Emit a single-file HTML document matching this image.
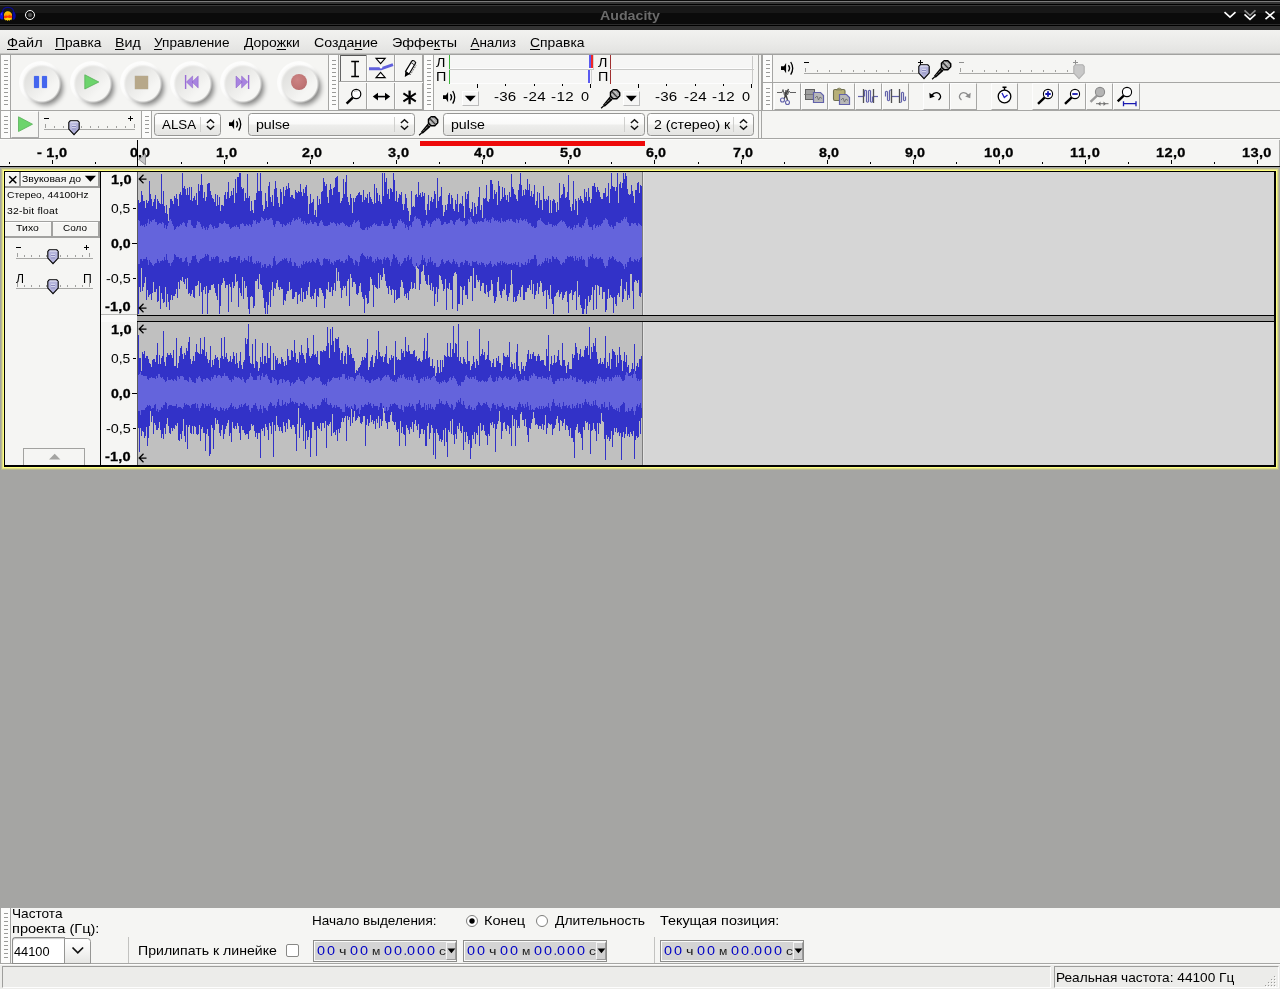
<!DOCTYPE html>
<html><head><meta charset="utf-8"><title>Audacity</title><style>
html,body{margin:0;padding:0}
body{width:1280px;height:989px;position:relative;overflow:hidden;background:#a5a5a3;font-family:"Liberation Sans", sans-serif;}
div,span,svg{position:absolute;box-sizing:border-box}
.t{white-space:pre;transform-origin:0 0;}
u{text-decoration:underline;text-decoration-thickness:1px;text-underline-offset:1.500px;text-decoration-skip-ink:none}
#root{left:0;top:0;width:1280px;height:989px;transform:translateZ(0);will-change:transform}
</style></head><body><div id="root">
<div style="left:0px;top:0px;width:1280px;height:30px;background:linear-gradient(to bottom,#0a0a0a 0px,#0a0a0a 1px,#7c7c7c 1px,#7c7c7c 2px,#333333 2px,#333333 4px,#000000 4px,#000000 5px,#383838 5px,#383838 6px,#181818 6px,#181818 13px,#0b0b0b 13px,#0b0b0b 24px,#2c2c2c 24px,#2c2c2c 25px,#000000 25px,#000000 26px,#333333 26px,#333333 30px);"></div>
<svg style="left:0;top:5px" width="17" height="18" viewBox="0 0 17 18">
<path d="M2.300 8.200 C2.300 3.600 5 2.300 8 2.300 C11 2.300 13.900 3.600 13.900 8.200" fill="none" stroke="#0a0a90" stroke-width="1.200"/>
<path d="M3.300 7 V14.600 H2 C0.600 14.600 -0.400 13 -0.400 11 C-0.400 9 0.800 7 2 7 Z" fill="#1212d6"/>
<path d="M1 8.400 L1.800 8 V10 L1 10.400 Z" fill="#4a4aff"/>
<path d="M12.600 6.800 V14.800 H13.600 C14.800 14.800 15.700 13 15.700 10.800 C15.700 8.600 14.800 6.800 13.600 6.800 Z" fill="#0a0a9c"/>
<path d="M3.900 11 C3.900 8 5.600 6.400 7.600 6.300 C9.800 6.200 12.100 7.800 12.100 11 C12.100 13 11.800 14.400 11.200 15.200 L10.400 14.600 L9.800 15.800 L8.600 14.900 L7.600 15.900 L6.800 14.900 L5.600 15.500 L5 14.600 L4.400 14.800 C4.100 13.800 3.900 12.400 3.900 11 Z" fill="#ffd200"/>
<path d="M4.600 8.400 Q8 6 11.500 8.600 L11.800 10.400 H4.200 Z" fill="#ffb400"/>
<path d="M4 10.900 L6 10.300 L7.600 10.800 L9.400 10 L12 10.700 V12.700 L9.400 13 L7.600 12.600 L5.800 13.200 L4 12.900 Z" fill="#ff3600"/>
<path d="M4 10.500 L6 9.900 L7.600 10.400 L9.400 9.600 L12 10.300" fill="none" stroke="#ff8a00" stroke-width=".700"/>
</svg>
<div style="left:25px;top:10px;width:10px;height:10px;border-radius:50%;border:1.600px solid #fff;background:radial-gradient(circle,#5c5c5c 0,#4a4a4a 1.700px,#0b0b0b 2.700px)"></div>
<span class="t" style="left:599.50px;top:9.33px;font-size:13.2px;line-height:13.2px;font-weight:bold;color:#6b6b6b;letter-spacing:0.000px;transform:scaleX(1.0768);">Audacity</span>
<svg style="left:1220px;top:6px" width="60" height="18" viewBox="0 0 60 18">
<g fill="none" stroke-linecap="butt">
<path d="M4.5 6.2 L10 11.2 L15.5 6.2" stroke="#fff" stroke-width="1.6"/>
<path d="M24.5 4.4 L30 9.4 L35.5 4.4" stroke="#8a8a8a" stroke-width="1.6"/>
<path d="M24.5 8.4 L30 13.4 L35.5 8.4" stroke="#fff" stroke-width="1.6"/>
<path d="M45.5 5.5 L54.5 13.2 M54.5 5.5 L45.5 13.2" stroke="#fff" stroke-width="1.6"/>
</g></svg>
<div style="left:0px;top:30px;width:1280px;height:24px;background:linear-gradient(to bottom,#f2f2f0 0,#ebebe9 50%,#e2e2e0 100%);"></div>
<div style="left:0px;top:53px;width:1280px;height:1px;background:#c4c4c2;"></div>
<div style="left:0px;top:54px;width:1280px;height:1px;background:#a2a2a0;"></div>
<span class="t" style="left:7.20px;top:36.07px;font-size:13.5px;line-height:13.5px;font-weight:normal;color:#000;letter-spacing:0.000px;transform:scaleX(1.0742);"><u>Ф</u>айл</span>
<span class="t" style="left:55.40px;top:36.07px;font-size:13.5px;line-height:13.5px;font-weight:normal;color:#000;letter-spacing:0.000px;transform:scaleX(1.0178);"><u>П</u>равка</span>
<span class="t" style="left:115.40px;top:36.07px;font-size:13.5px;line-height:13.5px;font-weight:normal;color:#000;letter-spacing:0.000px;transform:scaleX(1.0522);"><u>В</u>ид</span>
<span class="t" style="left:154.20px;top:36.07px;font-size:13.5px;line-height:13.5px;font-weight:normal;color:#000;letter-spacing:0.000px;transform:scaleX(1.0054);"><u>У</u>правление</span>
<span class="t" style="left:243.90px;top:36.07px;font-size:13.5px;line-height:13.5px;font-weight:normal;color:#000;letter-spacing:0.000px;transform:scaleX(1.0321);">Доро<u>ж</u>ки</span>
<span class="t" style="left:313.60px;top:36.07px;font-size:13.5px;line-height:13.5px;font-weight:normal;color:#000;letter-spacing:0.000px;transform:scaleX(1.0500);">Созда<u>н</u>ие</span>
<span class="t" style="left:391.70px;top:36.07px;font-size:13.5px;line-height:13.5px;font-weight:normal;color:#000;letter-spacing:0.000px;transform:scaleX(1.0617);">Эффе<u>к</u>ты</span>
<span class="t" style="left:470.40px;top:36.07px;font-size:13.5px;line-height:13.5px;font-weight:normal;color:#000;letter-spacing:0.000px;transform:scaleX(1.0000);"><u>А</u>нализ</span>
<span class="t" style="left:530.40px;top:36.07px;font-size:13.5px;line-height:13.5px;font-weight:normal;color:#000;letter-spacing:0.000px;transform:scaleX(1.0288);"><u>С</u>правка</span>
<div style="left:0px;top:55px;width:1280px;height:83px;background:#f5f5f3;"></div>
<div style="left:0px;top:110px;width:1280px;height:1px;background:#a6a6a4;"></div>
<div style="left:0px;top:138px;width:1280px;height:1px;background:#a6a6a4;"></div>
<div style="left:762px;top:82px;width:518px;height:1px;background:#a6a6a4;"></div>
<div style="left:0px;top:55px;width:1px;height:55px;background:#a6a6a4;"></div>
<div style="left:1px;top:55px;width:9px;height:55px;background:#fcfcfb;"></div>
<div style="left:10px;top:55px;width:1px;height:55px;background:#a6a6a4;"></div>
<div style="left:4px;top:60px;width:4px;height:1px;background:#9a9a98;"></div>
<div style="left:4px;top:64px;width:4px;height:1px;background:#9a9a98;"></div>
<div style="left:4px;top:68px;width:4px;height:1px;background:#9a9a98;"></div>
<div style="left:4px;top:72px;width:4px;height:1px;background:#9a9a98;"></div>
<div style="left:4px;top:76px;width:4px;height:1px;background:#9a9a98;"></div>
<div style="left:4px;top:80px;width:4px;height:1px;background:#9a9a98;"></div>
<div style="left:4px;top:84px;width:4px;height:1px;background:#9a9a98;"></div>
<div style="left:4px;top:88px;width:4px;height:1px;background:#9a9a98;"></div>
<div style="left:4px;top:92px;width:4px;height:1px;background:#9a9a98;"></div>
<div style="left:4px;top:96px;width:4px;height:1px;background:#9a9a98;"></div>
<div style="left:4px;top:100px;width:4px;height:1px;background:#9a9a98;"></div>
<div style="left:4px;top:104px;width:4px;height:1px;background:#9a9a98;"></div>
<div style="left:19px;top:61px;width:44px;height:44px;border-radius:50%;background:radial-gradient(circle at 46% 46%,rgba(255,255,255,0) 14px,#fdfdfd 18px,rgba(253,253,252,.9) 20px,rgba(250,250,249,0) 22px)"></div>
<div style="left:27.5px;top:69.9px;width:35px;height:35px;border-radius:50%;background:rgba(0,0,0,.46);filter:blur(2.800px)"></div>
<div style="left:21.7px;top:63.8px;width:40px;height:40px;background:linear-gradient(135deg,#dededc 14%,#e9e9e7 40%,#f6f6f4 68%);-webkit-mask-image:radial-gradient(circle,#000 16.900px,transparent 19.300px);mask-image:radial-gradient(circle,#000 16.900px,transparent 19.300px)"></div>
<div style="left:70px;top:61px;width:44px;height:44px;border-radius:50%;background:radial-gradient(circle at 46% 46%,rgba(255,255,255,0) 14px,#fdfdfd 18px,rgba(253,253,252,.9) 20px,rgba(250,250,249,0) 22px)"></div>
<div style="left:78.5px;top:69.9px;width:35px;height:35px;border-radius:50%;background:rgba(0,0,0,.46);filter:blur(2.800px)"></div>
<div style="left:72.7px;top:63.8px;width:40px;height:40px;background:linear-gradient(135deg,#dededc 14%,#e9e9e7 40%,#f6f6f4 68%);-webkit-mask-image:radial-gradient(circle,#000 16.900px,transparent 19.300px);mask-image:radial-gradient(circle,#000 16.900px,transparent 19.300px)"></div>
<div style="left:120px;top:61px;width:44px;height:44px;border-radius:50%;background:radial-gradient(circle at 46% 46%,rgba(255,255,255,0) 14px,#fdfdfd 18px,rgba(253,253,252,.9) 20px,rgba(250,250,249,0) 22px)"></div>
<div style="left:128.5px;top:69.9px;width:35px;height:35px;border-radius:50%;background:rgba(0,0,0,.46);filter:blur(2.800px)"></div>
<div style="left:122.7px;top:63.8px;width:40px;height:40px;background:linear-gradient(135deg,#dededc 14%,#e9e9e7 40%,#f6f6f4 68%);-webkit-mask-image:radial-gradient(circle,#000 16.900px,transparent 19.300px);mask-image:radial-gradient(circle,#000 16.900px,transparent 19.300px)"></div>
<div style="left:170px;top:61px;width:44px;height:44px;border-radius:50%;background:radial-gradient(circle at 46% 46%,rgba(255,255,255,0) 14px,#fdfdfd 18px,rgba(253,253,252,.9) 20px,rgba(250,250,249,0) 22px)"></div>
<div style="left:178.5px;top:69.9px;width:35px;height:35px;border-radius:50%;background:rgba(0,0,0,.46);filter:blur(2.800px)"></div>
<div style="left:172.7px;top:63.8px;width:40px;height:40px;background:linear-gradient(135deg,#dededc 14%,#e9e9e7 40%,#f6f6f4 68%);-webkit-mask-image:radial-gradient(circle,#000 16.900px,transparent 19.300px);mask-image:radial-gradient(circle,#000 16.900px,transparent 19.300px)"></div>
<div style="left:220px;top:61px;width:44px;height:44px;border-radius:50%;background:radial-gradient(circle at 46% 46%,rgba(255,255,255,0) 14px,#fdfdfd 18px,rgba(253,253,252,.9) 20px,rgba(250,250,249,0) 22px)"></div>
<div style="left:228.5px;top:69.9px;width:35px;height:35px;border-radius:50%;background:rgba(0,0,0,.46);filter:blur(2.800px)"></div>
<div style="left:222.7px;top:63.8px;width:40px;height:40px;background:linear-gradient(135deg,#dededc 14%,#e9e9e7 40%,#f6f6f4 68%);-webkit-mask-image:radial-gradient(circle,#000 16.900px,transparent 19.300px);mask-image:radial-gradient(circle,#000 16.900px,transparent 19.300px)"></div>
<div style="left:277px;top:61px;width:44px;height:44px;border-radius:50%;background:radial-gradient(circle at 46% 46%,rgba(255,255,255,0) 14px,#fdfdfd 18px,rgba(253,253,252,.9) 20px,rgba(250,250,249,0) 22px)"></div>
<div style="left:285.5px;top:69.9px;width:35px;height:35px;border-radius:50%;background:rgba(0,0,0,.46);filter:blur(2.800px)"></div>
<div style="left:279.7px;top:63.8px;width:40px;height:40px;background:linear-gradient(135deg,#dededc 14%,#e9e9e7 40%,#f6f6f4 68%);-webkit-mask-image:radial-gradient(circle,#000 16.900px,transparent 19.300px);mask-image:radial-gradient(circle,#000 16.900px,transparent 19.300px)"></div>
<div style="left:34px;top:76px;width:5px;height:12px;background:#4466ee;border-radius:1px;box-shadow:0 0 1px #4466ee"></div>
<div style="left:42px;top:76px;width:5px;height:12px;background:#4466ee;border-radius:1px;box-shadow:0 0 1px #4466ee"></div>
<svg style="left:82px;top:72px" width="20" height="20"><path d="M2.8 2.8 L16.8 10 L2.8 17 Z" fill="#6cd46c" stroke="#58b058" stroke-width=".8"/></svg>
<div style="left:135px;top:76px;width:13px;height:13px;background:#b7a88a;box-shadow:0 0 1px #9a8f78"></div>
<svg style="left:182px;top:72px" width="20" height="20"><path d="M3.6 3 V17" stroke="#9a6cd6" stroke-width="1.4"/><path d="M4.4 10 L10.6 4 V16 Z M10 10 L16.2 4 V16 Z" fill="#a884e0" stroke="#8a5ec8" stroke-width=".5"/></svg>
<svg style="left:232px;top:72px" width="20" height="20"><path d="M16.6 3 V17" stroke="#9a6cd6" stroke-width="1.4"/><path d="M15.8 10 L9.6 4 V16 Z M10.2 10 L4 4 V16 Z" fill="#a884e0" stroke="#8a5ec8" stroke-width=".5"/></svg>
<div style="left:291px;top:74px;width:16px;height:16px;border-radius:50%;background:radial-gradient(circle at 40% 35%,#cc8484,#bf7474 60%,#a86060)"></div>
<div style="left:328px;top:55px;width:1px;height:55px;background:#a6a6a4;"></div>
<div style="left:328px;top:55px;width:1px;height:55px;background:#a6a6a4;"></div>
<div style="left:329px;top:55px;width:9px;height:55px;background:#fcfcfb;"></div>
<div style="left:338px;top:55px;width:1px;height:55px;background:#a6a6a4;"></div>
<div style="left:332px;top:60px;width:4px;height:1px;background:#9a9a98;"></div>
<div style="left:332px;top:64px;width:4px;height:1px;background:#9a9a98;"></div>
<div style="left:332px;top:68px;width:4px;height:1px;background:#9a9a98;"></div>
<div style="left:332px;top:72px;width:4px;height:1px;background:#9a9a98;"></div>
<div style="left:332px;top:76px;width:4px;height:1px;background:#9a9a98;"></div>
<div style="left:332px;top:80px;width:4px;height:1px;background:#9a9a98;"></div>
<div style="left:332px;top:84px;width:4px;height:1px;background:#9a9a98;"></div>
<div style="left:332px;top:88px;width:4px;height:1px;background:#9a9a98;"></div>
<div style="left:332px;top:92px;width:4px;height:1px;background:#9a9a98;"></div>
<div style="left:332px;top:96px;width:4px;height:1px;background:#9a9a98;"></div>
<div style="left:332px;top:100px;width:4px;height:1px;background:#9a9a98;"></div>
<div style="left:332px;top:104px;width:4px;height:1px;background:#9a9a98;"></div>
<div style="left:339px;top:55px;width:84px;height:55px;background:#f5f5f3;"></div>
<div style="left:366px;top:55px;width:1px;height:55px;background:#a4a4a2;"></div>
<div style="left:367px;top:55px;width:1px;height:55px;background:#fbfbfa;"></div>
<div style="left:394px;top:55px;width:1px;height:55px;background:#a4a4a2;"></div>
<div style="left:395px;top:55px;width:1px;height:55px;background:#fbfbfa;"></div>
<div style="left:422px;top:55px;width:1px;height:55px;background:#a4a4a2;"></div>
<div style="left:423px;top:55px;width:1px;height:55px;background:#fbfbfa;"></div>
<div style="left:339px;top:81px;width:84px;height:1px;background:#a4a4a2;"></div>
<div style="left:339px;top:82px;width:84px;height:1px;background:#fbfbfa;"></div>
<div style="left:339px;top:109px;width:84px;height:1px;background:#a4a4a2;"></div>
<div style="left:340px;top:55px;width:26px;height:1px;background:#555;"></div>
<div style="left:340px;top:55px;width:1px;height:26px;background:#666;"></div>
<svg style="left:340px;top:55px" width="83" height="55" viewBox="0 0 83 55">
<path d="M11.200 6.600 H19 M11.200 21.600 H19 M15.100 6.600 V21.600" stroke="#000" stroke-width="1.500" fill="none"/>
<path d="M36 3.400 H45.200 L40.600 8.600 Z M36 22.600 H45.200 L40.600 17.400 Z" fill="#fff" stroke="#000" stroke-width="1.100"/>
<path d="M29 13.800 H41 L53 9.600" fill="none" stroke="#6060dc" stroke-width="2.900"/>
<circle cx="41" cy="12.300" r="1.200" fill="#fff"/>
<path d="M65.600 16.400 L71.200 7.200 L74.600 9.700 L69 19.200 Z" fill="#fff" stroke="#000" stroke-width="1.200"/>
<path d="M65.400 16.200 L64.800 22 L69.300 19.300 Z" fill="#000"/>
<path d="M71.200 7.200 L72.300 5.600 Q74.600 5 75.700 7.700 L74.600 9.700" fill="#e4e4e4" stroke="#000" stroke-width="1.100"/>
<path d="M70.300 19.800 L76 10.600" stroke="#444" stroke-width=".900" stroke-dasharray="1 1"/>
<circle cx="16.200" cy="39" r="4.600" fill="#fff" stroke="#000" stroke-width="1.200"/>
<path d="M14 36.800 Q15.500 35.600 17.400 36" fill="none" stroke="#aaa" stroke-width=".800"/>
<path d="M12.800 42.600 L6.600 48.600" stroke="#000" stroke-width="2.500"/>
<path d="M35 41.600 H48" stroke="#000" stroke-width="1.600"/>
<path d="M32.800 41.600 L38 37.800 V45.400 Z M50.200 41.600 L45 37.800 V45.400 Z" fill="#000"/>
<path d="M69.600 35.600 V49.200" stroke="#000" stroke-width="2.300" fill="none"/>
<path d="M63.400 38.400 L75.800 46.400 M75.800 38.400 L63.400 46.400" stroke="#000" stroke-width="1.900" fill="none"/>
</svg>
<div style="left:423px;top:55px;width:1px;height:55px;background:#a6a6a4;"></div>
<div style="left:423px;top:55px;width:1px;height:55px;background:#a6a6a4;"></div>
<div style="left:424px;top:55px;width:9px;height:55px;background:#fcfcfb;"></div>
<div style="left:433px;top:55px;width:1px;height:55px;background:#a6a6a4;"></div>
<div style="left:427px;top:60px;width:4px;height:1px;background:#9a9a98;"></div>
<div style="left:427px;top:64px;width:4px;height:1px;background:#9a9a98;"></div>
<div style="left:427px;top:68px;width:4px;height:1px;background:#9a9a98;"></div>
<div style="left:427px;top:72px;width:4px;height:1px;background:#9a9a98;"></div>
<div style="left:427px;top:76px;width:4px;height:1px;background:#9a9a98;"></div>
<div style="left:427px;top:80px;width:4px;height:1px;background:#9a9a98;"></div>
<div style="left:427px;top:84px;width:4px;height:1px;background:#9a9a98;"></div>
<div style="left:427px;top:88px;width:4px;height:1px;background:#9a9a98;"></div>
<div style="left:427px;top:92px;width:4px;height:1px;background:#9a9a98;"></div>
<div style="left:427px;top:96px;width:4px;height:1px;background:#9a9a98;"></div>
<div style="left:427px;top:100px;width:4px;height:1px;background:#9a9a98;"></div>
<div style="left:427px;top:104px;width:4px;height:1px;background:#9a9a98;"></div>
<div style="left:449px;top:55px;width:145px;height:14px;background:#f6f6f5;"></div>
<div style="left:449px;top:70px;width:145px;height:14px;background:#f6f6f5;"></div>
<div style="left:449px;top:69px;width:145px;height:1px;background:#c8c8c6;"></div>
<div style="left:449px;top:68px;width:145px;height:1px;background:#fdfdfd;"></div>
<div style="left:449px;top:83px;width:145px;height:1px;background:#fdfdfd;"></div>
<div style="left:449px;top:55px;width:1px;height:14px;background:#3cb43c;"></div>
<div style="left:449px;top:70px;width:1px;height:14px;background:#3cb43c;"></div>
<div style="left:610px;top:55px;width:144px;height:14px;background:#f6f6f5;"></div>
<div style="left:610px;top:70px;width:144px;height:14px;background:#f6f6f5;"></div>
<div style="left:610px;top:69px;width:144px;height:1px;background:#c8c8c6;"></div>
<div style="left:610px;top:68px;width:144px;height:1px;background:#fdfdfd;"></div>
<div style="left:610px;top:83px;width:144px;height:1px;background:#fdfdfd;"></div>
<div style="left:610px;top:55px;width:1px;height:14px;background:#a03030;"></div>
<div style="left:610px;top:70px;width:1px;height:14px;background:#a03030;"></div>
<div style="left:752px;top:56px;width:1px;height:28px;background:#c8c8c6;"></div>
<div style="left:589px;top:55px;width:2px;height:13px;background:#5a5af0;"></div>
<div style="left:591px;top:55px;width:2px;height:13px;background:#f02828;"></div>
<div style="left:588px;top:70px;width:2px;height:13px;background:#5a5af0;"></div>
<div style="left:593px;top:55px;width:1px;height:14px;background:#d0d0ce;"></div>
<div style="left:591px;top:70px;width:1px;height:14px;background:#d0d0ce;"></div>
<span class="t" style="left:436.20px;top:56.07px;font-size:13.5px;line-height:13.5px;font-weight:normal;color:#000;letter-spacing:0.000px;transform:scaleX(1.0625);">Л</span>
<span class="t" style="left:436.20px;top:70.07px;font-size:13.5px;line-height:13.5px;font-weight:normal;color:#000;letter-spacing:0.000px;transform:scaleX(1.0625);">П</span>
<span class="t" style="left:597.70px;top:56.07px;font-size:13.5px;line-height:13.5px;font-weight:normal;color:#000;letter-spacing:0.000px;transform:scaleX(1.0625);">Л</span>
<span class="t" style="left:597.70px;top:70.07px;font-size:13.5px;line-height:13.5px;font-weight:normal;color:#000;letter-spacing:0.000px;transform:scaleX(1.0625);">П</span>
<div style="left:477px;top:84px;width:1px;height:4px;background:#000;"></div>
<div style="left:505px;top:84px;width:1px;height:2px;background:#000;"></div>
<div style="left:534px;top:84px;width:1px;height:2px;background:#000;"></div>
<div style="left:562px;top:84px;width:1px;height:2px;background:#000;"></div>
<div style="left:590px;top:84px;width:1px;height:4px;background:#000;"></div>
<div style="left:638px;top:84px;width:1px;height:4px;background:#000;"></div>
<div style="left:666px;top:84px;width:1px;height:2px;background:#000;"></div>
<div style="left:695px;top:84px;width:1px;height:2px;background:#000;"></div>
<div style="left:723px;top:84px;width:1px;height:2px;background:#000;"></div>
<div style="left:751px;top:84px;width:1px;height:4px;background:#000;"></div>
<span class="t" style="left:493.70px;top:90.07px;font-size:13.5px;line-height:13.5px;font-weight:normal;color:#000;letter-spacing:0.152px;transform:scaleX(1.1200);">-36</span>
<span class="t" style="left:522.70px;top:90.07px;font-size:13.5px;line-height:13.5px;font-weight:normal;color:#000;letter-spacing:0.375px;transform:scaleX(1.1200);">-24</span>
<span class="t" style="left:550.70px;top:90.07px;font-size:13.5px;line-height:13.5px;font-weight:normal;color:#000;letter-spacing:0.375px;transform:scaleX(1.1200);">-12</span>
<span class="t" style="left:581.20px;top:90.07px;font-size:13.5px;line-height:13.5px;font-weight:normal;color:#000;letter-spacing:0.000px;transform:scaleX(1.0714);">0</span>
<span class="t" style="left:654.70px;top:90.07px;font-size:13.5px;line-height:13.5px;font-weight:normal;color:#000;letter-spacing:0.152px;transform:scaleX(1.1200);">-36</span>
<span class="t" style="left:683.70px;top:90.07px;font-size:13.5px;line-height:13.5px;font-weight:normal;color:#000;letter-spacing:0.375px;transform:scaleX(1.1200);">-24</span>
<span class="t" style="left:711.70px;top:90.07px;font-size:13.5px;line-height:13.5px;font-weight:normal;color:#000;letter-spacing:0.375px;transform:scaleX(1.1200);">-12</span>
<span class="t" style="left:742.20px;top:90.07px;font-size:13.5px;line-height:13.5px;font-weight:normal;color:#000;letter-spacing:0.000px;transform:scaleX(1.0714);">0</span>
<svg style="left:442.200px;top:90.100px" width="15" height="15" viewBox="0 0 15 15"><path d="M1 5.200 H4 L6.100 1.900 V12.300 L4 9 H1 Z" fill="#000"/><path d="M8.400 4.300 Q10.700 7.100 8.400 10.300" fill="none" stroke="#000" stroke-width="1.400"/><path d="M10.700 1 Q14.700 7.200 10.700 13.600" fill="none" stroke="#000" stroke-width="1.300"/></svg>
<div style="left:462px;top:91px;width:17px;height:15px;background:#f6f6f5;border-right:1px solid #bbb;border-bottom:1px solid #bbb;border-top:1px solid #fff;border-left:1px solid #fff"></div>
<svg style="left:464px;top:95px" width="13" height="8"><path d="M0.8 0.8 H11.8 L6.3 6.6 Z" fill="#000"/></svg>
<div style="left:623px;top:91px;width:17px;height:15px;background:#f6f6f5;border-right:1px solid #bbb;border-bottom:1px solid #bbb;border-top:1px solid #fff;border-left:1px solid #fff"></div>
<svg style="left:625px;top:95px" width="13" height="8"><path d="M0.8 0.8 H11.8 L6.3 6.6 Z" fill="#000"/></svg>
<svg style="left:600px;top:87px" width="22" height="22" viewBox="0 0 22 22"><path d="M9.600 9.800 L12.600 12.700 L4.700 19.700 L2.900 17.900 Z" fill="#000"/>
<path d="M3.800 18.800 L1.100 21.300" stroke="#000" stroke-width="1.200"/>
<path d="M10.600 11.600 L4.800 17.600" stroke="#fff" stroke-width=".800" stroke-dasharray="1 1"/>
<path d="M13.200 2.800 H16.800 L19.700 5.800 V8.800 L16.800 11.700 H13 L10.500 9.400 V5.400 Z" fill="#a8a8a8" stroke="#000" stroke-width="1.500" stroke-linejoin="round"/>
<path d="M13.400 3.600 L18.800 9" stroke="#e8e8e8" stroke-width="1" stroke-dasharray="1.100 .900"/>
<path d="M12.200 5 L17.400 10.400" stroke="#303030" stroke-width="1.100"/>
<path d="M11.400 7 L15.400 11.200" stroke="#e8e8e8" stroke-width="1" stroke-dasharray="1.100 .900"/></svg>
<div style="left:758px;top:55px;width:1px;height:83px;background:#a6a6a4;"></div>
<div style="left:761px;top:55px;width:1px;height:83px;background:#a6a6a4;"></div>
<div style="left:762px;top:55px;width:1px;height:27px;background:#a6a6a4;"></div>
<div style="left:763px;top:55px;width:9px;height:27px;background:#fcfcfb;"></div>
<div style="left:772px;top:55px;width:1px;height:27px;background:#a6a6a4;"></div>
<div style="left:766px;top:60px;width:4px;height:1px;background:#9a9a98;"></div>
<div style="left:766px;top:64px;width:4px;height:1px;background:#9a9a98;"></div>
<div style="left:766px;top:68px;width:4px;height:1px;background:#9a9a98;"></div>
<div style="left:766px;top:72px;width:4px;height:1px;background:#9a9a98;"></div>
<div style="left:766px;top:76px;width:4px;height:1px;background:#9a9a98;"></div>
<svg style="left:779.700px;top:61.400px" width="15" height="15" viewBox="0 0 15 15"><path d="M1 5.200 H4 L6.100 1.900 V12.300 L4 9 H1 Z" fill="#000"/><path d="M8.400 4.300 Q10.700 7.100 8.400 10.300" fill="none" stroke="#000" stroke-width="1.400"/><path d="M10.700 1 Q14.700 7.200 10.700 13.600" fill="none" stroke="#000" stroke-width="1.300"/></svg>
<div style="left:804px;top:73px;width:121px;height:1px;background:#a8a8a6;"></div>
<div style="left:805px;top:68px;width:1px;height:4px;background:#a0a09e;"></div>
<div style="left:817px;top:70px;width:1px;height:2px;background:#a0a09e;"></div>
<div style="left:829px;top:70px;width:1px;height:2px;background:#a0a09e;"></div>
<div style="left:841px;top:70px;width:1px;height:2px;background:#a0a09e;"></div>
<div style="left:853px;top:70px;width:1px;height:2px;background:#a0a09e;"></div>
<div style="left:864px;top:70px;width:1px;height:2px;background:#a0a09e;"></div>
<div style="left:876px;top:70px;width:1px;height:2px;background:#a0a09e;"></div>
<div style="left:888px;top:70px;width:1px;height:2px;background:#a0a09e;"></div>
<div style="left:900px;top:70px;width:1px;height:2px;background:#a0a09e;"></div>
<div style="left:912px;top:70px;width:1px;height:2px;background:#a0a09e;"></div>
<div style="left:924px;top:68px;width:1px;height:4px;background:#a0a09e;"></div>
<div style="left:804px;top:62px;width:5px;height:1.4px;background:#000;"></div>
<div style="left:918px;top:61.8px;width:5.4px;height:1.4px;background:#000;"></div>
<div style="left:920px;top:59.8px;width:1.4px;height:5.4px;background:#000;"></div>
<svg style="left:918px;top:64px" width="12" height="16" viewBox="0 0 12 16"><defs><linearGradient id="tg" x1="0" y1="0" x2="1" y2="1"><stop offset="0" stop-color="#c8c8e8"/><stop offset="1" stop-color="#a0a0cc"/></linearGradient></defs><path d="M2.2 0.8 H9.8 L11.2 2.4 V9 L6 14.6 L0.8 9 V2.4 Z" fill="url(#tg)" stroke="#000" stroke-width="1.100"/><path d="M2.600 2 H9.400 L10.200 2.800" fill="none" stroke="#f4f4fc" stroke-width=".800" opacity="1"/><path d="M4 6.3 H8 M4 8.8 H8" stroke="#8080b8" stroke-width="1"/><path d="M4 5.4 H8 M4 7.8 H8" stroke="#e8e8f8" stroke-width=".8"/></svg>
<svg style="left:931px;top:58px" width="22" height="22" viewBox="0 0 22 22"><path d="M9.600 9.800 L12.600 12.700 L4.700 19.700 L2.900 17.900 Z" fill="#000"/>
<path d="M3.800 18.800 L1.100 21.300" stroke="#000" stroke-width="1.200"/>
<path d="M10.600 11.600 L4.800 17.600" stroke="#fff" stroke-width=".800" stroke-dasharray="1 1"/>
<path d="M13.200 2.800 H16.800 L19.700 5.800 V8.800 L16.800 11.700 H13 L10.500 9.400 V5.400 Z" fill="#a8a8a8" stroke="#000" stroke-width="1.500" stroke-linejoin="round"/>
<path d="M13.400 3.600 L18.800 9" stroke="#e8e8e8" stroke-width="1" stroke-dasharray="1.100 .900"/>
<path d="M12.200 5 L17.400 10.400" stroke="#303030" stroke-width="1.100"/>
<path d="M11.400 7 L15.400 11.200" stroke="#e8e8e8" stroke-width="1" stroke-dasharray="1.100 .900"/></svg>
<div style="left:959px;top:73px;width:121px;height:1px;background:#a8a8a6;"></div>
<div style="left:960px;top:68px;width:1px;height:4px;background:#a0a09e;"></div>
<div style="left:972px;top:70px;width:1px;height:2px;background:#a0a09e;"></div>
<div style="left:984px;top:70px;width:1px;height:2px;background:#a0a09e;"></div>
<div style="left:996px;top:70px;width:1px;height:2px;background:#a0a09e;"></div>
<div style="left:1008px;top:70px;width:1px;height:2px;background:#a0a09e;"></div>
<div style="left:1020px;top:70px;width:1px;height:2px;background:#a0a09e;"></div>
<div style="left:1031px;top:70px;width:1px;height:2px;background:#a0a09e;"></div>
<div style="left:1043px;top:70px;width:1px;height:2px;background:#a0a09e;"></div>
<div style="left:1055px;top:70px;width:1px;height:2px;background:#a0a09e;"></div>
<div style="left:1067px;top:70px;width:1px;height:2px;background:#a0a09e;"></div>
<div style="left:1079px;top:68px;width:1px;height:4px;background:#a0a09e;"></div>
<div style="left:959px;top:62px;width:5px;height:1.4px;background:#909090;"></div>
<div style="left:1073px;top:61.8px;width:5.4px;height:1.4px;background:#909090;"></div>
<div style="left:1075px;top:59.8px;width:1.4px;height:5.4px;background:#909090;"></div>
<svg style="left:1073px;top:64px" width="12" height="16" viewBox="0 0 12 16"><defs><linearGradient id="tg" x1="0" y1="0" x2="1" y2="1"><stop offset="0" stop-color="#c8c8e8"/><stop offset="1" stop-color="#a0a0cc"/></linearGradient></defs><path d="M2.2 0.8 H9.8 L11.2 2.4 V9 L6 14.6 L0.8 9 V2.4 Z" fill="#c8c8c8" stroke="#b0b0b0" stroke-width="1.100"/><path d="M2.600 2 H9.400 L10.200 2.800" fill="none" stroke="#f4f4fc" stroke-width=".800" opacity="0"/></svg>
<div style="left:762px;top:83px;width:1px;height:27px;background:#a6a6a4;"></div>
<div style="left:763px;top:83px;width:9px;height:27px;background:#fcfcfb;"></div>
<div style="left:772px;top:83px;width:1px;height:27px;background:#a6a6a4;"></div>
<div style="left:766px;top:88px;width:4px;height:1px;background:#9a9a98;"></div>
<div style="left:766px;top:92px;width:4px;height:1px;background:#9a9a98;"></div>
<div style="left:766px;top:96px;width:4px;height:1px;background:#9a9a98;"></div>
<div style="left:766px;top:100px;width:4px;height:1px;background:#9a9a98;"></div>
<div style="left:766px;top:104px;width:4px;height:1px;background:#9a9a98;"></div>
<div style="left:774px;top:83px;width:27px;height:27px;background:#f6f6f4;border-right:1px solid #a6a6a4;border-bottom:1px solid #a6a6a4;border-top:1px solid #fdfdfd;border-left:1px solid #fdfdfd"></div>
<div style="left:801px;top:83px;width:27px;height:27px;background:#f6f6f4;border-right:1px solid #a6a6a4;border-bottom:1px solid #a6a6a4;border-top:1px solid #fdfdfd;border-left:1px solid #fdfdfd"></div>
<div style="left:828px;top:83px;width:27px;height:27px;background:#f6f6f4;border-right:1px solid #a6a6a4;border-bottom:1px solid #a6a6a4;border-top:1px solid #fdfdfd;border-left:1px solid #fdfdfd"></div>
<div style="left:855px;top:83px;width:27px;height:27px;background:#f6f6f4;border-right:1px solid #a6a6a4;border-bottom:1px solid #a6a6a4;border-top:1px solid #fdfdfd;border-left:1px solid #fdfdfd"></div>
<div style="left:882px;top:83px;width:27px;height:27px;background:#f6f6f4;border-right:1px solid #a6a6a4;border-bottom:1px solid #a6a6a4;border-top:1px solid #fdfdfd;border-left:1px solid #fdfdfd"></div>
<div style="left:923px;top:83px;width:27px;height:27px;background:#f6f6f4;border-right:1px solid #a6a6a4;border-bottom:1px solid #a6a6a4;border-top:1px solid #fdfdfd;border-left:1px solid #fdfdfd"></div>
<div style="left:950px;top:83px;width:27px;height:27px;background:#f6f6f4;border-right:1px solid #a6a6a4;border-bottom:1px solid #a6a6a4;border-top:1px solid #fdfdfd;border-left:1px solid #fdfdfd"></div>
<div style="left:991px;top:83px;width:27px;height:27px;background:#f6f6f4;border-right:1px solid #a6a6a4;border-bottom:1px solid #a6a6a4;border-top:1px solid #fdfdfd;border-left:1px solid #fdfdfd"></div>
<div style="left:1032px;top:83px;width:27px;height:27px;background:#f6f6f4;border-right:1px solid #a6a6a4;border-bottom:1px solid #a6a6a4;border-top:1px solid #fdfdfd;border-left:1px solid #fdfdfd"></div>
<div style="left:1059px;top:83px;width:27px;height:27px;background:#f6f6f4;border-right:1px solid #a6a6a4;border-bottom:1px solid #a6a6a4;border-top:1px solid #fdfdfd;border-left:1px solid #fdfdfd"></div>
<div style="left:1086px;top:83px;width:27px;height:27px;background:#f6f6f4;border-right:1px solid #a6a6a4;border-bottom:1px solid #a6a6a4;border-top:1px solid #fdfdfd;border-left:1px solid #fdfdfd"></div>
<div style="left:1113px;top:83px;width:27px;height:27px;background:#f6f6f4;border-right:1px solid #a6a6a4;border-bottom:1px solid #a6a6a4;border-top:1px solid #fdfdfd;border-left:1px solid #fdfdfd"></div>
<svg style="left:773px;top:83px" width="27" height="27" viewBox="0 0 27 27"><path d="M4 9.5 H9 L10 6.5 L11.5 12.5 L13 7 L14.5 12 L16 8 L17 9.5 H23" fill="none" stroke="#606060" stroke-width="1"/>
<path d="M15.5 6 L11 16 M12 9 L14.5 17" stroke="#404040" stroke-width="1.4"/>
<circle cx="9.5" cy="17" r="2" fill="#f4f4f4" stroke="#6262aa" stroke-width="1.1"/><circle cx="14.5" cy="19.5" r="2" fill="#f4f4f4" stroke="#6262aa" stroke-width="1.1"/></svg>
<svg style="left:800px;top:83px" width="27" height="27" viewBox="0 0 27 27"><rect x="5.5" y="6.5" width="9" height="10" fill="#a0a0a0" stroke="#606060"/>
<path d="M4 11.5 H16" stroke="#707070" stroke-width=".8"/>
<path d="M13.500 9.500 H20.5 L23.5 12.5 V19.5 H13.5 Z" fill="#b8b8b8" stroke="#6262aa" stroke-width="1.2"/>
<path d="M15 15 L17 13 L18.5 17 L20 14 L22 15.5" fill="none" stroke="#707070" stroke-width=".9"/></svg>
<svg style="left:827px;top:83px" width="27" height="27" viewBox="0 0 27 27"><rect x="6.500" y="6.500" width="11.5" height="11" rx="1.500" fill="#b8b078" stroke="#707050" stroke-width="1.1"/>
<path d="M9.5 6.8 Q12.2 3.500 15 6.800 Z" fill="#d8d088" stroke="#707050" stroke-width=".9"/>
<path d="M12.5 11.5 H19.5 L22.5 14.5 V21.5 H12.5 Z" fill="#b8b8b8" stroke="#6262aa" stroke-width="1.2"/>
<path d="M14 17 L16 15 L17.5 19 L19 16 L21 17.5" fill="none" stroke="#707070" stroke-width=".9"/></svg>
<svg style="left:855px;top:83px" width="27" height="27" viewBox="0 0 27 27"><path d="M3 13.500 H8" stroke="#6262aa" stroke-width="1.2"/><path d="M18.500 13.500 H23" stroke="#6262aa" stroke-width="1.2"/>
<path d="M8.500 6 V20 M18.500 6 V20" stroke="#505050" stroke-width="1.3"/>
<path d="M9.500 13.500 V8 Q10.800 6.500 11.500 8 V18.500 Q12.500 20 13.500 18.500 V8 Q14.500 6.500 15.500 8 V18.500 Q16.500 20 17.500 18.500 V13.500" fill="none" stroke="#6262aa" stroke-width="1.2"/></svg>
<svg style="left:882px;top:83px" width="27" height="27" viewBox="0 0 27 27"><path d="M9.500 13.500 H17.500" stroke="#6262aa" stroke-width="1.2"/>
<path d="M9.500 6 V20 M17.500 6 V20" stroke="#505050" stroke-width="1.3"/>
<path d="M3.500 13.500 V9 Q4.500 7.500 5.500 9 V17 Q6.500 18.500 7.500 17 V8 Q8 7 8.800 7" fill="none" stroke="#6262aa" stroke-width="1.2"/>
<path d="M18.200 19.500 Q19 19.500 19.500 18.500 V10 Q20.500 8.500 21.500 10 V17 Q22.500 18.500 23.500 17 V13.500" fill="none" stroke="#6262aa" stroke-width="1.2"/></svg>
<svg style="left:923px;top:83px" width="27" height="27" viewBox="0 0 27 27"><path d="M8.500 12.500 Q12 8 16 10.500 Q19.500 14 15.500 17" fill="none" stroke="#000" stroke-width="1.3"/><path d="M6.300 9.800 L6.800 15.200 L11.800 13.400 Z" fill="#000"/></svg>
<svg style="left:950px;top:83px" width="27" height="27" viewBox="0 0 27 27"><path d="M18.500 12.500 Q15 8 11 10.500 Q7.500 14 11.500 17" fill="none" stroke="#8c8c8c" stroke-width="1.3"/><path d="M20.700 9.800 L20.200 15.200 L15.200 13.400 Z" fill="#8c8c8c"/></svg>
<svg style="left:991px;top:83px" width="27" height="27" viewBox="0 0 27 27"><circle cx="14.500" cy="14.500" r="6.300" fill="#e8e8e8"/><circle cx="13.500" cy="13.500" r="6.300" fill="#fff" stroke="#000" stroke-width="1.3"/>
<path d="M11.500 4.300 H15.500 M13.500 4.500 V7" stroke="#000" stroke-width="1.400"/>
<path d="M11 10 L13.300 14.500 L16.500 12" fill="none" stroke="#2020c0" stroke-width="1.300"/></svg>
<svg style="left:1033px;top:83px" width="27" height="27" viewBox="0 0 27 27"><path d="M11.800 14.400 L5 20.800" stroke="#000" stroke-width="2.400"/><circle cx="15" cy="11" r="4.600" fill="#fff" stroke="#000" stroke-width="1.100"/><path d="M12.300 11 H17.700 M15 8.300 V13.700" stroke="#1818b0" stroke-width="1.800"/></svg>
<svg style="left:1060px;top:83px" width="27" height="27" viewBox="0 0 27 27"><path d="M11.800 14.400 L5 20.800" stroke="#000" stroke-width="2.400"/><circle cx="15" cy="11" r="4.600" fill="#fff" stroke="#000" stroke-width="1.100"/><path d="M12.300 11 H17.700" stroke="#1818b0" stroke-width="1.800"/></svg>
<svg style="left:1087px;top:83px" width="27" height="27" viewBox="0 0 27 27"><path d="M10.300 12.400 L3.500 18.800" stroke="#9a9a9a" stroke-width="2.400"/><circle cx="13" cy="9" r="4.600" fill="#b4b4b4" stroke="#8a8a8a" stroke-width="1.100"/><path d="M9 20.700 H21.500" stroke="#707070" stroke-width="1"/><path d="M13.500 18.500 V22.900 L11 20.700 Z M16.500 18.500 V22.900 L19 20.700 Z" fill="#707070"/></svg>
<svg style="left:1114px;top:83px" width="27" height="27" viewBox="0 0 27 27"><path d="M10 12.400 L3.700 18.300" stroke="#000" stroke-width="2.400"/><circle cx="13" cy="9" r="4.600" fill="#fff" stroke="#000" stroke-width="1.100"/><path d="M9.500 20.700 H22 M9.500 18.200 V23.200 M22 18.200 V23.200" stroke="#1818b0" stroke-width="1.300"/></svg>
<div style="left:0px;top:111px;width:1px;height:27px;background:#a6a6a4;"></div>
<div style="left:1px;top:111px;width:9px;height:27px;background:#fcfcfb;"></div>
<div style="left:10px;top:111px;width:1px;height:27px;background:#a6a6a4;"></div>
<div style="left:4px;top:116px;width:4px;height:1px;background:#9a9a98;"></div>
<div style="left:4px;top:120px;width:4px;height:1px;background:#9a9a98;"></div>
<div style="left:4px;top:124px;width:4px;height:1px;background:#9a9a98;"></div>
<div style="left:4px;top:128px;width:4px;height:1px;background:#9a9a98;"></div>
<div style="left:4px;top:132px;width:4px;height:1px;background:#9a9a98;"></div>
<div style="left:11px;top:111px;width:28px;height:27px;background:#f6f6f4;border-right:1px solid #aaa;border-bottom:1px solid #aaa;border-top:1px solid #fdfdfd;border-left:1px solid #fdfdfd"></div>
<svg style="left:16px;top:114px" width="20" height="20"><path d="M2.500 2.800 L16.500 10.200 L2.500 17.500 Z" fill="#6cd46c" stroke="#58b058" stroke-width=".8"/></svg>
<div style="left:44px;top:129px;width:91px;height:1px;background:#a8a8a6;"></div>
<div style="left:45px;top:124px;width:1px;height:4px;background:#a0a09e;"></div>
<div style="left:54px;top:126px;width:1px;height:2px;background:#a0a09e;"></div>
<div style="left:63px;top:126px;width:1px;height:2px;background:#a0a09e;"></div>
<div style="left:72px;top:126px;width:1px;height:2px;background:#a0a09e;"></div>
<div style="left:81px;top:126px;width:1px;height:2px;background:#a0a09e;"></div>
<div style="left:90px;top:126px;width:1px;height:2px;background:#a0a09e;"></div>
<div style="left:98px;top:126px;width:1px;height:2px;background:#a0a09e;"></div>
<div style="left:107px;top:126px;width:1px;height:2px;background:#a0a09e;"></div>
<div style="left:116px;top:126px;width:1px;height:2px;background:#a0a09e;"></div>
<div style="left:125px;top:126px;width:1px;height:2px;background:#a0a09e;"></div>
<div style="left:134px;top:124px;width:1px;height:4px;background:#a0a09e;"></div>
<div style="left:44px;top:118px;width:5px;height:1.4px;background:#000;"></div>
<div style="left:128px;top:117.8px;width:5.4px;height:1.4px;background:#000;"></div>
<div style="left:130px;top:115.8px;width:1.4px;height:5.4px;background:#000;"></div>
<svg style="left:68px;top:120px" width="12" height="16" viewBox="0 0 12 16"><defs><linearGradient id="tg" x1="0" y1="0" x2="1" y2="1"><stop offset="0" stop-color="#c8c8e8"/><stop offset="1" stop-color="#a0a0cc"/></linearGradient></defs><path d="M2.2 0.8 H9.8 L11.2 2.4 V9 L6 14.6 L0.8 9 V2.4 Z" fill="url(#tg)" stroke="#000" stroke-width="1.100"/><path d="M2.600 2 H9.400 L10.200 2.800" fill="none" stroke="#f4f4fc" stroke-width=".800" opacity="1"/><path d="M4 6.3 H8 M4 8.8 H8" stroke="#8080b8" stroke-width="1"/><path d="M4 5.4 H8 M4 7.8 H8" stroke="#e8e8f8" stroke-width=".8"/></svg>
<div style="left:141px;top:111px;width:1px;height:27px;background:#a6a6a4;"></div>
<div style="left:141px;top:111px;width:1px;height:27px;background:#a6a6a4;"></div>
<div style="left:142px;top:111px;width:9px;height:27px;background:#fcfcfb;"></div>
<div style="left:151px;top:111px;width:1px;height:27px;background:#a6a6a4;"></div>
<div style="left:145px;top:116px;width:4px;height:1px;background:#9a9a98;"></div>
<div style="left:145px;top:120px;width:4px;height:1px;background:#9a9a98;"></div>
<div style="left:145px;top:124px;width:4px;height:1px;background:#9a9a98;"></div>
<div style="left:145px;top:128px;width:4px;height:1px;background:#9a9a98;"></div>
<div style="left:145px;top:132px;width:4px;height:1px;background:#9a9a98;"></div>
<div style="left:154px;top:113px;width:67px;height:23px;border:1px solid #969694;border-radius:3.500px;background:linear-gradient(to bottom,#ffffff 0,#fafaf9 45%,#ededeb 55%,#e4e4e2 100%);box-shadow:0 1px 0 #fcfcfc"></div>
<div style="left:200px;top:117px;width:1px;height:15px;background:#cfcfcd;"></div>
<svg style="left:206px;top:118px" width="10" height="13"><path d="M0.900 4.900 L4.500 1.700 L8.100 4.900 M0.900 8.100 L4.500 11.300 L8.100 8.100" fill="none" stroke="#111" stroke-width="1.400"/></svg>
<span class="t" style="left:162.00px;top:118.07px;font-size:13.5px;line-height:13.5px;font-weight:normal;color:#000;letter-spacing:0.000px;transform:scaleX(0.9857);">ALSA</span>
<svg style="left:228px;top:117px" width="15" height="15" viewBox="0 0 15 15"><path d="M1 5.200 H4 L6.100 1.900 V12.300 L4 9 H1 Z" fill="#000"/><path d="M8.400 4.300 Q10.700 7.100 8.400 10.300" fill="none" stroke="#000" stroke-width="1.400"/><path d="M10.700 1 Q14.700 7.200 10.700 13.600" fill="none" stroke="#000" stroke-width="1.300"/></svg>
<div style="left:248px;top:113px;width:167px;height:23px;border:1px solid #969694;border-radius:3.500px;background:linear-gradient(to bottom,#ffffff 0,#fafaf9 45%,#ededeb 55%,#e4e4e2 100%);box-shadow:0 1px 0 #fcfcfc"></div>
<div style="left:394px;top:117px;width:1px;height:15px;background:#cfcfcd;"></div>
<svg style="left:400px;top:118px" width="10" height="13"><path d="M0.900 4.900 L4.500 1.700 L8.100 4.900 M0.900 8.100 L4.500 11.300 L8.100 8.100" fill="none" stroke="#111" stroke-width="1.400"/></svg>
<span class="t" style="left:255.50px;top:118.07px;font-size:13.5px;line-height:13.5px;font-weight:normal;color:#000;letter-spacing:0.000px;transform:scaleX(1.0484);">pulse</span>
<svg style="left:418px;top:114px" width="22" height="22" viewBox="0 0 22 22"><path d="M9.600 9.800 L12.600 12.700 L4.700 19.700 L2.900 17.900 Z" fill="#000"/>
<path d="M3.800 18.800 L1.100 21.300" stroke="#000" stroke-width="1.200"/>
<path d="M10.600 11.600 L4.800 17.600" stroke="#fff" stroke-width=".800" stroke-dasharray="1 1"/>
<path d="M13.200 2.800 H16.800 L19.700 5.800 V8.800 L16.800 11.700 H13 L10.500 9.400 V5.400 Z" fill="#a8a8a8" stroke="#000" stroke-width="1.500" stroke-linejoin="round"/>
<path d="M13.400 3.600 L18.800 9" stroke="#e8e8e8" stroke-width="1" stroke-dasharray="1.100 .900"/>
<path d="M12.200 5 L17.400 10.400" stroke="#303030" stroke-width="1.100"/>
<path d="M11.400 7 L15.400 11.200" stroke="#e8e8e8" stroke-width="1" stroke-dasharray="1.100 .900"/></svg>
<div style="left:443px;top:113px;width:202px;height:23px;border:1px solid #969694;border-radius:3.500px;background:linear-gradient(to bottom,#ffffff 0,#fafaf9 45%,#ededeb 55%,#e4e4e2 100%);box-shadow:0 1px 0 #fcfcfc"></div>
<div style="left:624px;top:117px;width:1px;height:15px;background:#cfcfcd;"></div>
<svg style="left:630px;top:118px" width="10" height="13"><path d="M0.900 4.900 L4.500 1.700 L8.100 4.900 M0.900 8.100 L4.500 11.300 L8.100 8.100" fill="none" stroke="#111" stroke-width="1.400"/></svg>
<span class="t" style="left:450.50px;top:118.07px;font-size:13.5px;line-height:13.5px;font-weight:normal;color:#000;letter-spacing:0.000px;transform:scaleX(1.0484);">pulse</span>
<div style="left:647px;top:113px;width:107px;height:23px;border:1px solid #969694;border-radius:3.500px;background:linear-gradient(to bottom,#ffffff 0,#fafaf9 45%,#ededeb 55%,#e4e4e2 100%);box-shadow:0 1px 0 #fcfcfc"></div>
<div style="left:733px;top:117px;width:1px;height:15px;background:#cfcfcd;"></div>
<svg style="left:739px;top:118px" width="10" height="13"><path d="M0.900 4.900 L4.500 1.700 L8.100 4.900 M0.900 8.100 L4.500 11.300 L8.100 8.100" fill="none" stroke="#111" stroke-width="1.400"/></svg>
<span class="t" style="left:653.50px;top:118.07px;font-size:13.5px;line-height:13.5px;font-weight:normal;color:#000;letter-spacing:0.000px;transform:scaleX(1.0486);">2 (стерео) к</span>
<div style="left:0px;top:139px;width:1279px;height:27px;background:#f5f5f3;"></div>
<div style="left:1279px;top:139px;width:1px;height:27px;background:#b0b0ae;"></div>
<div style="left:0px;top:139px;width:1280px;height:1px;background:#fbfbfa;"></div>
<div style="left:0px;top:166px;width:1280px;height:1px;background:#000;"></div>
<div style="left:420px;top:141px;width:225px;height:5px;background:#ee0a0a;"></div>
<div style="left:52px;top:160px;width:1px;height:4px;background:#000;"></div>
<div style="left:9px;top:162px;width:1px;height:2px;background:#000;"></div>
<span class="t" style="left:36.70px;top:146.25px;font-size:13px;line-height:13px;font-weight:bold;color:#000;letter-spacing:0.196px;transform:scaleX(1.1200);-webkit-text-stroke:.300px #000">- 1,0</span>
<div style="left:95px;top:162px;width:1px;height:2px;background:#000;"></div>
<span class="t" style="left:130.20px;top:146.25px;font-size:13px;line-height:13px;font-weight:bold;color:#000;letter-spacing:0.000px;transform:scaleX(1.1000);-webkit-text-stroke:.300px #000">0,0</span>
<div style="left:224px;top:160px;width:1px;height:4px;background:#000;"></div>
<div style="left:181px;top:162px;width:1px;height:2px;background:#000;"></div>
<span class="t" style="left:215.70px;top:146.25px;font-size:13px;line-height:13px;font-weight:bold;color:#000;letter-spacing:0.339px;transform:scaleX(1.1200);-webkit-text-stroke:.300px #000">1,0</span>
<div style="left:310px;top:160px;width:1px;height:4px;background:#000;"></div>
<div style="left:267px;top:162px;width:1px;height:2px;background:#000;"></div>
<span class="t" style="left:301.70px;top:146.25px;font-size:13px;line-height:13px;font-weight:bold;color:#000;letter-spacing:0.000px;transform:scaleX(1.1000);-webkit-text-stroke:.300px #000">2,0</span>
<div style="left:396px;top:160px;width:1px;height:4px;background:#000;"></div>
<div style="left:353px;top:162px;width:1px;height:2px;background:#000;"></div>
<span class="t" style="left:387.70px;top:146.25px;font-size:13px;line-height:13px;font-weight:bold;color:#000;letter-spacing:0.339px;transform:scaleX(1.1200);-webkit-text-stroke:.300px #000">3,0</span>
<div style="left:482px;top:160px;width:1px;height:4px;background:#000;"></div>
<div style="left:439px;top:162px;width:1px;height:2px;background:#000;"></div>
<span class="t" style="left:473.70px;top:146.25px;font-size:13px;line-height:13px;font-weight:bold;color:#000;letter-spacing:0.000px;transform:scaleX(1.1000);-webkit-text-stroke:.300px #000">4,0</span>
<div style="left:568px;top:160px;width:1px;height:4px;background:#000;"></div>
<div style="left:525px;top:162px;width:1px;height:2px;background:#000;"></div>
<span class="t" style="left:559.70px;top:146.25px;font-size:13px;line-height:13px;font-weight:bold;color:#000;letter-spacing:0.339px;transform:scaleX(1.1200);-webkit-text-stroke:.300px #000">5,0</span>
<div style="left:654px;top:160px;width:1px;height:4px;background:#000;"></div>
<div style="left:611px;top:162px;width:1px;height:2px;background:#000;"></div>
<span class="t" style="left:645.70px;top:146.25px;font-size:13px;line-height:13px;font-weight:bold;color:#000;letter-spacing:0.000px;transform:scaleX(1.1000);-webkit-text-stroke:.300px #000">6,0</span>
<div style="left:741px;top:160px;width:1px;height:4px;background:#000;"></div>
<div style="left:698px;top:162px;width:1px;height:2px;background:#000;"></div>
<span class="t" style="left:732.70px;top:146.25px;font-size:13px;line-height:13px;font-weight:bold;color:#000;letter-spacing:0.000px;transform:scaleX(1.1000);-webkit-text-stroke:.300px #000">7,0</span>
<div style="left:827px;top:160px;width:1px;height:4px;background:#000;"></div>
<div style="left:784px;top:162px;width:1px;height:2px;background:#000;"></div>
<span class="t" style="left:818.70px;top:146.25px;font-size:13px;line-height:13px;font-weight:bold;color:#000;letter-spacing:0.000px;transform:scaleX(1.1000);-webkit-text-stroke:.300px #000">8,0</span>
<div style="left:913px;top:160px;width:1px;height:4px;background:#000;"></div>
<div style="left:870px;top:162px;width:1px;height:2px;background:#000;"></div>
<span class="t" style="left:904.70px;top:146.25px;font-size:13px;line-height:13px;font-weight:bold;color:#000;letter-spacing:0.000px;transform:scaleX(1.1000);-webkit-text-stroke:.300px #000">9,0</span>
<div style="left:999px;top:160px;width:1px;height:4px;background:#000;"></div>
<div style="left:956px;top:162px;width:1px;height:2px;background:#000;"></div>
<span class="t" style="left:984.20px;top:146.25px;font-size:13px;line-height:13px;font-weight:bold;color:#000;letter-spacing:0.333px;transform:scaleX(1.1200);-webkit-text-stroke:.300px #000">10,0</span>
<div style="left:1085px;top:160px;width:1px;height:4px;background:#000;"></div>
<div style="left:1042px;top:162px;width:1px;height:2px;background:#000;"></div>
<span class="t" style="left:1070.20px;top:146.25px;font-size:13px;line-height:13px;font-weight:bold;color:#000;letter-spacing:0.667px;transform:scaleX(1.1200);-webkit-text-stroke:.300px #000">11,0</span>
<div style="left:1171px;top:160px;width:1px;height:4px;background:#000;"></div>
<div style="left:1128px;top:162px;width:1px;height:2px;background:#000;"></div>
<span class="t" style="left:1156.20px;top:146.25px;font-size:13px;line-height:13px;font-weight:bold;color:#000;letter-spacing:0.333px;transform:scaleX(1.1200);-webkit-text-stroke:.300px #000">12,0</span>
<div style="left:1257px;top:160px;width:1px;height:4px;background:#000;"></div>
<div style="left:1214px;top:162px;width:1px;height:2px;background:#000;"></div>
<span class="t" style="left:1242.20px;top:146.25px;font-size:13px;line-height:13px;font-weight:bold;color:#000;letter-spacing:0.333px;transform:scaleX(1.1200);-webkit-text-stroke:.300px #000">13,0</span>
<div style="left:137px;top:140px;width:1px;height:26px;background:#000;"></div>
<svg style="left:138px;top:153px" width="9" height="13"><path d="M7.500 0.800 V11.800 L0.700 6.300 Z" fill="#c6c6c6" stroke="#8a8a8a" stroke-width=".9"/></svg>
<div style="left:1px;top:168px;width:1278px;height:302px;background:#b9b98e;"></div>
<div style="left:2px;top:169px;width:1276px;height:300px;background:#dcdc8a;"></div>
<div style="left:3px;top:170px;width:1274px;height:298px;background:#ffff80;"></div>
<div style="left:4px;top:171px;width:1272px;height:296px;background:#000;"></div>
<div style="left:5px;top:172px;width:1269px;height:293px;background:#d6d6d6;"></div>
<div style="left:5px;top:172px;width:95px;height:293px;background:#f5f5f3;"></div>
<div style="left:100px;top:172px;width:1px;height:293px;background:#000;"></div>
<div style="left:101px;top:172px;width:36px;height:293px;background:#f5f5f3;"></div>
<div style="left:101px;top:314px;width:36px;height:1px;background:#b8b8b6;"></div>
<div style="left:101px;top:315px;width:36px;height:7px;background:#fafaf9;"></div>
<div style="left:137px;top:172px;width:1px;height:293px;background:#5c5c5c;"></div>
<div style="left:138px;top:172px;width:504px;height:143px;background:#c0c0c0;"></div>
<div style="left:642px;top:172px;width:1px;height:143px;background:#7e7e7e;"></div>
<div style="left:643px;top:172px;width:1px;height:143px;background:#e2e2e2;"></div>
<div style="left:138px;top:322px;width:504px;height:143px;background:#c0c0c0;"></div>
<div style="left:642px;top:322px;width:1px;height:143px;background:#7e7e7e;"></div>
<div style="left:643px;top:322px;width:1px;height:143px;background:#e2e2e2;"></div>
<div style="left:137px;top:315px;width:1137px;height:1px;background:#000;"></div>
<div style="left:137px;top:316px;width:1137px;height:5px;background:#a6a6a4;"></div>
<div style="left:137px;top:321px;width:1137px;height:1px;background:#000;"></div>
<svg style="left:138px;top:172px" width="504" height="143" viewBox="0 0 504 143" shape-rendering="crispEdges"><path d="M0.5 28V142M1.5 31V115M2.5 30V120M3.5 19V96M4.5 23V119M5.5 29V115M6.5 29V111M7.5 36V105M8.5 28V128M9.5 31V118M10.5 29V125M11.5 9V123M12.5 22V122M13.5 27V128M14.5 34V121M15.5 30V110M16.5 27V120M17.5 23V120M18.5 37V117M19.5 27V130M20.5 29V129M21.5 31V114M22.5 32V137M23.5 2V121M24.5 32V127M25.5 19V131M26.5 34V130M27.5 41V115M28.5 33V135M29.5 42V122M30.5 49V130M31.5 36V138M32.5 27V128M33.5 27V123M34.5 29V128M35.5 32V124M36.5 24V124M37.5 26V122M38.5 22V117M39.5 27V126M40.5 34V110M41.5 22V117M42.5 20V108M43.5 23V109M44.5 1V105M45.5 16V110M46.5 14V112M47.5 17V107M48.5 23V117M49.5 16V106M50.5 23V122M51.5 15V121M52.5 28V124M53.5 15V122M54.5 29V118M55.5 26V125M56.5 24V126M57.5 28V114M58.5 21V114M59.5 33V113M60.5 12V109M61.5 19V124M62.5 13V111M63.5 2V120M64.5 13V142M65.5 26V118M66.5 20V115M67.5 29V122M68.5 25V114M69.5 12V142M70.5 11V121M71.5 11V118M72.5 19V118M73.5 23V113M74.5 26V113M75.5 27V112M76.5 30V116M77.5 22V121M78.5 34V124M79.5 23V128M80.5 33V112M81.5 25V142M82.5 39V134M83.5 33V113M84.5 33V111M85.5 34V106M86.5 23V109M87.5 20V116M88.5 27V113M89.5 20V113M90.5 10V140M91.5 26V112M92.5 24V115M93.5 19V130M94.5 23V110M95.5 16V116M96.5 31V114M97.5 7V102M98.5 21V110M99.5 5V109M100.5 5V135M101.5 1V116M102.5 1V121M103.5 15V124M104.5 17V105M105.5 16V127M106.5 29V109M107.5 21V116M108.5 26V114M109.5 2V125M110.5 26V137M111.5 24V142M112.5 39V125M113.5 29V124M114.5 38V125M115.5 41V136M116.5 28V134M117.5 28V109M118.5 21V109M119.5 1V107M120.5 19V117M121.5 19V102M122.5 1V112M123.5 19V113M124.5 33V118M125.5 39V126M126.5 37V136M127.5 21V142M128.5 29V130M129.5 35V142M130.5 14V133M131.5 10V120M132.5 25V135M133.5 30V118M134.5 23V110M135.5 34V124M136.5 17V116M137.5 9V117M138.5 16V111M139.5 25V108M140.5 31V115M141.5 35V118M142.5 17V115M143.5 20V117M144.5 32V117M145.5 15V133M146.5 24V128M147.5 18V129M148.5 14V122M149.5 17V119M150.5 11V119M151.5 16V110M152.5 25V118M153.5 23V117M154.5 23V127M155.5 26V127M156.5 27V125M157.5 18V120M158.5 20V120M159.5 21V132M160.5 19V123M161.5 20V122M162.5 12V129M163.5 20V116M164.5 24V130M165.5 17V120M166.5 21V127M167.5 15V127M168.5 13V119M169.5 24V123M170.5 42V115M171.5 32V110M172.5 22V125M173.5 31V127M174.5 30V124M175.5 27V127M176.5 43V121M177.5 38V117M178.5 45V135M179.5 24V124M180.5 33V125M181.5 27V116M182.5 32V116M183.5 20V118M184.5 19V121M185.5 6V124M186.5 10V136M187.5 14V127M188.5 12V117M189.5 25V118M190.5 31V110M191.5 18V120M192.5 12V120M193.5 17V115M194.5 23V124M195.5 16V118M196.5 15V111M197.5 6V119M198.5 5V96M199.5 4V109M200.5 20V100M201.5 20V109M202.5 31V116M203.5 29V126M204.5 26V118M205.5 7V114M206.5 22V116M207.5 10V114M208.5 3V124M209.5 25V109M210.5 30V107M211.5 33V134M212.5 22V102M213.5 26V106M214.5 41V115M215.5 26V110M216.5 30V110M217.5 26V112M218.5 24V122M219.5 23V123M220.5 21V121M221.5 20V114M222.5 23V111M223.5 23V120M224.5 30V125M225.5 18V127M226.5 28V141M227.5 25V123M228.5 26V126M229.5 22V132M230.5 31V131M231.5 20V119M232.5 25V105M233.5 27V107M234.5 30V113M235.5 32V135M236.5 12V113M237.5 31V115M238.5 16V116M239.5 21V117M240.5 29V101M241.5 23V116M242.5 30V103M243.5 32V108M244.5 1V105M245.5 24V96M246.5 1V102M247.5 10V109M248.5 6V114M249.5 22V116M250.5 17V122M251.5 27V114M252.5 16V118M253.5 17V123M254.5 20V117M255.5 1V118M256.5 8V131M257.5 29V118M258.5 19V128M259.5 30V127M260.5 26V126M261.5 22V126M262.5 23V115M263.5 20V108M264.5 32V110M265.5 38V116M266.5 32V124M267.5 22V122M268.5 26V126M269.5 36V121M270.5 39V128M271.5 49V119M272.5 43V117M273.5 19V110M274.5 35V117M275.5 34V116M276.5 35V111M277.5 23V117M278.5 22V94M279.5 25V96M280.5 10V97M281.5 23V118M282.5 21V112M283.5 25V100M284.5 20V99M285.5 24V93M286.5 21V103M287.5 38V109M288.5 43V112M289.5 32V113M290.5 23V103M291.5 38V113M292.5 29V118M293.5 25V111M294.5 30V119M295.5 27V115M296.5 19V134M297.5 22V122M298.5 36V115M299.5 6V130M300.5 29V117M301.5 25V103M302.5 24V104M303.5 15V108M304.5 33V112M305.5 44V119M306.5 40V117M307.5 33V107M308.5 38V138M309.5 32V116M310.5 23V117M311.5 21V111M312.5 32V118M313.5 23V118M314.5 26V137M315.5 37V104M316.5 39V101M317.5 28V100M318.5 32V102M319.5 22V139M320.5 40V132M321.5 32V132M322.5 31V114M323.5 32V115M324.5 24V133M325.5 34V118M326.5 46V114M327.5 20V123M328.5 27V123M329.5 22V127M330.5 19V107M331.5 36V110M332.5 40V104M333.5 37V104M334.5 30V129M335.5 44V96M336.5 31V116M337.5 35V116M338.5 42V103M339.5 34V108M340.5 25V110M341.5 15V108M342.5 38V119M343.5 33V114M344.5 46V111M345.5 26V111M346.5 27V121M347.5 26V122M348.5 13V113M349.5 29V120M350.5 30V125M351.5 27V119M352.5 8V118M353.5 8V108M354.5 12V112M355.5 27V124M356.5 18V131M357.5 22V129M358.5 20V125M359.5 33V110M360.5 9V105M361.5 14V119M362.5 29V123M363.5 27V126M364.5 15V119M365.5 25V117M366.5 16V118M367.5 23V112M368.5 28V123M369.5 23V129M370.5 30V125M371.5 20V121M372.5 25V113M373.5 2V98M374.5 15V112M375.5 17V130M376.5 22V125M377.5 23V130M378.5 27V129M379.5 29V124M380.5 18V122M381.5 12V118M382.5 1V125M383.5 13V115M384.5 24V113M385.5 18V128M386.5 23V128M387.5 17V120M388.5 18V120M389.5 7V116M390.5 18V116M391.5 12V113M392.5 24V118M393.5 19V108M394.5 25V122M395.5 22V112M396.5 13V127M397.5 33V123M398.5 29V119M399.5 20V111M400.5 36V122M401.5 21V115M402.5 28V109M403.5 28V111M404.5 38V120M405.5 14V124M406.5 27V119M407.5 29V118M408.5 27V137M409.5 28V118M410.5 24V123M411.5 41V127M412.5 28V113M413.5 41V127M414.5 29V132M415.5 27V142M416.5 28V125M417.5 31V124M418.5 40V121M419.5 30V120M420.5 38V118M421.5 11V125M422.5 26V122M423.5 23V120M424.5 22V128M425.5 12V126M426.5 15V123M427.5 26V120M428.5 25V119M429.5 20V130M430.5 3V141M431.5 28V122M432.5 35V121M433.5 39V118M434.5 32V128M435.5 9V123M436.5 38V120M437.5 27V119M438.5 29V138M439.5 43V109M440.5 26V125M441.5 28V123M442.5 24V133M443.5 27V136M444.5 29V142M445.5 31V142M446.5 17V137M447.5 25V127M448.5 20V142M449.5 29V134M450.5 16V124M451.5 25V130M452.5 31V128M453.5 27V123M454.5 14V115M455.5 14V138M456.5 11V118M457.5 15V113M458.5 20V137M459.5 15V113M460.5 18V114M461.5 20V123M462.5 25V115M463.5 27V115M464.5 27V127M465.5 21V120M466.5 21V120M467.5 16V140M468.5 25V138M469.5 24V127M470.5 11V117M471.5 31V126M472.5 17V123M473.5 1V125M474.5 14V126M475.5 15V141M476.5 15V125M477.5 19V132M478.5 15V134M479.5 1V123M480.5 31V121M481.5 12V125M482.5 10V114M483.5 16V107M484.5 11V130M485.5 1V127M486.5 7V117M487.5 1V119M488.5 4V110M489.5 17V128M490.5 22V123M491.5 23V126M492.5 22V102M493.5 13V102M494.5 19V119M495.5 24V137M496.5 31V110M497.5 18V108M498.5 18V109M499.5 11V111M500.5 10V108M501.5 21V124M502.5 13V125M503.5 14V121" stroke="#3232c8" stroke-width="1" fill="none"/><path d="M0.5 48V92M1.5 49V92M2.5 54V87M3.5 53V87M4.5 54V89M5.5 53V87M6.5 55V87M7.5 52V87M8.5 54V85M9.5 51V88M10.5 47V93M11.5 52V88M12.5 49V90M13.5 50V91M14.5 48V93M15.5 48V94M16.5 47V92M17.5 50V91M18.5 50V91M19.5 53V87M20.5 52V89M21.5 51V91M22.5 51V89M23.5 52V89M24.5 50V88M25.5 51V89M26.5 56V85M27.5 53V88M28.5 57V82M29.5 54V88M30.5 51V91M31.5 48V91M32.5 47V94M33.5 49V91M34.5 52V90M35.5 54V88M36.5 58V82M37.5 57V83M38.5 55V85M39.5 54V85M40.5 55V85M41.5 54V87M42.5 52V86M43.5 53V86M44.5 51V90M45.5 50V90M46.5 51V89M47.5 54V86M48.5 55V85M49.5 51V90M50.5 48V94M51.5 48V91M52.5 48V91M53.5 53V88M54.5 54V84M55.5 56V84M56.5 56V84M57.5 56V83M58.5 53V87M59.5 49V90M60.5 50V91M61.5 50V89M62.5 52V87M63.5 55V87M64.5 57V86M65.5 54V86M66.5 56V85M67.5 58V82M68.5 55V84M69.5 58V82M70.5 56V83M71.5 53V89M72.5 52V89M73.5 53V85M74.5 55V87M75.5 57V85M76.5 54V87M77.5 56V85M78.5 56V84M79.5 56V84M80.5 55V85M81.5 51V91M82.5 51V90M83.5 52V90M84.5 52V87M85.5 51V89M86.5 49V91M87.5 51V89M88.5 52V89M89.5 52V90M90.5 52V90M91.5 55V85M92.5 57V84M93.5 56V86M94.5 55V86M95.5 55V85M96.5 54V85M97.5 55V85M98.5 53V88M99.5 55V86M100.5 55V84M101.5 57V84M102.5 52V91M103.5 52V88M104.5 51V90M105.5 52V89M106.5 54V86M107.5 54V88M108.5 52V88M109.5 53V89M110.5 54V84M111.5 52V90M112.5 53V85M113.5 55V84M114.5 52V90M115.5 48V92M116.5 49V91M117.5 48V92M118.5 52V89M119.5 50V91M120.5 51V89M121.5 51V91M122.5 49V90M123.5 45V96M124.5 46V93M125.5 47V95M126.5 49V92M127.5 48V92M128.5 46V96M129.5 48V94M130.5 48V94M131.5 47V92M132.5 46V93M133.5 46V96M134.5 48V94M135.5 53V86M136.5 55V84M137.5 52V89M138.5 49V93M139.5 49V92M140.5 49V91M141.5 50V90M142.5 52V89M143.5 52V89M144.5 55V87M145.5 52V88M146.5 53V86M147.5 54V87M148.5 53V86M149.5 51V89M150.5 52V91M151.5 50V89M152.5 53V86M153.5 50V90M154.5 48V94M155.5 46V94M156.5 49V90M157.5 48V91M158.5 47V94M159.5 48V94M160.5 45V96M161.5 47V94M162.5 46V96M163.5 50V92M164.5 49V93M165.5 52V89M166.5 49V92M167.5 51V90M168.5 53V89M169.5 51V91M170.5 52V90M171.5 51V89M172.5 48V91M173.5 50V90M174.5 52V87M175.5 52V89M176.5 50V90M177.5 50V91M178.5 51V88M179.5 54V86M180.5 54V87M181.5 51V90M182.5 49V93M183.5 48V94M184.5 50V93M185.5 53V87M186.5 54V86M187.5 54V87M188.5 54V87M189.5 54V87M190.5 53V89M191.5 53V87M192.5 50V92M193.5 51V90M194.5 51V91M195.5 50V93M196.5 51V89M197.5 52V90M198.5 54V88M199.5 51V88M200.5 52V88M201.5 53V87M202.5 51V90M203.5 51V89M204.5 50V89M205.5 51V91M206.5 52V91M207.5 54V88M208.5 53V87M209.5 54V89M210.5 55V83M211.5 55V84M212.5 53V86M213.5 55V86M214.5 52V87M215.5 50V91M216.5 48V93M217.5 51V88M218.5 50V89M219.5 49V90M220.5 48V94M221.5 50V90M222.5 56V84M223.5 57V82M224.5 58V81M225.5 58V83M226.5 58V84M227.5 56V85M228.5 55V87M229.5 58V84M230.5 55V87M231.5 56V85M232.5 54V84M233.5 55V85M234.5 53V90M235.5 52V89M236.5 51V91M237.5 53V87M238.5 52V89M239.5 54V85M240.5 54V87M241.5 54V88M242.5 54V87M243.5 52V88M244.5 49V92M245.5 52V87M246.5 54V85M247.5 54V88M248.5 54V86M249.5 54V85M250.5 53V86M251.5 51V88M252.5 47V94M253.5 51V90M254.5 54V87M255.5 57V82M256.5 57V83M257.5 54V86M258.5 54V85M259.5 51V88M260.5 48V92M261.5 49V90M262.5 47V94M263.5 49V92M264.5 51V91M265.5 50V89M266.5 52V86M267.5 56V86M268.5 53V89M269.5 55V85M270.5 58V83M271.5 54V88M272.5 53V87M273.5 55V85M274.5 50V92M275.5 49V94M276.5 45V95M277.5 44V97M278.5 47V91M279.5 46V94M280.5 47V95M281.5 47V93M282.5 49V92M283.5 53V88M284.5 56V83M285.5 54V88M286.5 54V86M287.5 51V90M288.5 48V94M289.5 49V91M290.5 52V87M291.5 51V90M292.5 55V85M293.5 52V90M294.5 50V89M295.5 49V93M296.5 48V91M297.5 49V91M298.5 46V95M299.5 47V95M300.5 46V95M301.5 47V94M302.5 49V92M303.5 53V88M304.5 53V87M305.5 52V90M306.5 50V92M307.5 50V91M308.5 52V89M309.5 52V89M310.5 51V88M311.5 51V90M312.5 48V91M313.5 48V92M314.5 49V90M315.5 52V87M316.5 53V89M317.5 50V92M318.5 48V90M319.5 48V92M320.5 47V95M321.5 46V95M322.5 49V91M323.5 49V90M324.5 50V90M325.5 49V93M326.5 49V91M327.5 54V88M328.5 53V89M329.5 52V89M330.5 47V93M331.5 48V91M332.5 45V94M333.5 47V94M334.5 50V89M335.5 51V90M336.5 52V90M337.5 50V90M338.5 52V89M339.5 50V92M340.5 49V93M341.5 50V91M342.5 49V93M343.5 49V90M344.5 50V91M345.5 50V91M346.5 47V93M347.5 46V95M348.5 49V92M349.5 48V93M350.5 50V92M351.5 48V91M352.5 51V89M353.5 47V92M354.5 45V95M355.5 46V94M356.5 49V92M357.5 48V93M358.5 49V94M359.5 48V90M360.5 50V91M361.5 49V91M362.5 51V89M363.5 46V93M364.5 49V89M365.5 50V91M366.5 49V90M367.5 50V92M368.5 48V91M369.5 48V93M370.5 47V92M371.5 49V92M372.5 47V92M373.5 47V91M374.5 49V93M375.5 50V91M376.5 50V92M377.5 51V90M378.5 47V93M379.5 48V93M380.5 51V90M381.5 48V95M382.5 46V95M383.5 48V91M384.5 49V92M385.5 48V93M386.5 47V93M387.5 49V90M388.5 47V93M389.5 50V91M390.5 52V87M391.5 51V91M392.5 51V88M393.5 54V87M394.5 55V87M395.5 54V87M396.5 56V83M397.5 56V83M398.5 55V87M399.5 49V94M400.5 48V93M401.5 48V92M402.5 46V94M403.5 49V92M404.5 50V90M405.5 51V91M406.5 52V89M407.5 53V86M408.5 53V89M409.5 53V86M410.5 50V91M411.5 52V87M412.5 52V87M413.5 52V90M414.5 55V84M415.5 53V85M416.5 54V87M417.5 53V87M418.5 54V85M419.5 52V87M420.5 51V88M421.5 50V89M422.5 49V92M423.5 48V93M424.5 50V91M425.5 49V90M426.5 50V91M427.5 52V87M428.5 54V87M429.5 56V84M430.5 55V85M431.5 54V85M432.5 57V84M433.5 56V85M434.5 58V84M435.5 55V86M436.5 53V89M437.5 56V84M438.5 53V88M439.5 53V86M440.5 51V89M441.5 55V85M442.5 55V87M443.5 56V84M444.5 53V88M445.5 54V87M446.5 51V88M447.5 48V94M448.5 45V95M449.5 47V95M450.5 53V85M451.5 55V87M452.5 55V84M453.5 55V85M454.5 58V82M455.5 53V86M456.5 52V87M457.5 56V86M458.5 54V85M459.5 53V87M460.5 55V87M461.5 53V86M462.5 54V85M463.5 52V87M464.5 51V87M465.5 48V91M466.5 48V94M467.5 46V96M468.5 47V94M469.5 48V94M470.5 52V88M471.5 54V85M472.5 55V87M473.5 53V86M474.5 55V84M475.5 57V85M476.5 54V88M477.5 54V87M478.5 50V89M479.5 50V90M480.5 51V90M481.5 51V89M482.5 51V90M483.5 48V91M484.5 49V92M485.5 47V94M486.5 45V97M487.5 47V92M488.5 45V95M489.5 50V90M490.5 51V90M491.5 54V86M492.5 54V85M493.5 51V89M494.5 51V89M495.5 52V90M496.5 51V87M497.5 51V88M498.5 53V89M499.5 54V87M500.5 51V90M501.5 52V88M502.5 53V86M503.5 54V85" stroke="#6464dc" stroke-width="1" fill="none"/></svg>
<svg style="left:138px;top:173.5px" width="10" height="10"><path d="M1 5 H8.500 M5.500 0.800 L1.200 5 L5.500 9.200" fill="none" stroke="#000" stroke-width="1.250"/></svg>
<svg style="left:138px;top:302.5px" width="10" height="10"><path d="M1 5 H8.500 M5.500 0.800 L1.200 5 L5.500 9.200" fill="none" stroke="#000" stroke-width="1.250"/></svg>
<svg style="left:138px;top:322px" width="504" height="143" viewBox="0 0 504 143" shape-rendering="crispEdges"><path d="M0.5 13V106M1.5 36V130M2.5 36V106M3.5 49V114M4.5 30V109M5.5 32V110M6.5 29V116M7.5 36V114M8.5 34V105M9.5 34V124M10.5 37V116M11.5 41V104M12.5 42V89M13.5 45V100M14.5 38V94M15.5 37V112M16.5 37V101M17.5 40V103M18.5 33V108M19.5 21V108M20.5 42V106M21.5 33V100M22.5 42V108M23.5 36V116M24.5 34V112M25.5 9V117M26.5 40V106M27.5 44V112M28.5 35V102M29.5 31V96M30.5 33V104M31.5 33V111M32.5 31V112M33.5 33V106M34.5 36V109M35.5 28V106M36.5 44V107M37.5 44V103M38.5 16V104M39.5 46V101M40.5 41V118M41.5 34V119M42.5 26V112M43.5 24V117M44.5 32V109M45.5 37V97M46.5 31V114M47.5 33V120M48.5 26V103M49.5 29V127M50.5 20V105M51.5 15V103M52.5 37V111M53.5 42V112M54.5 39V104M55.5 34V112M56.5 39V104M57.5 30V105M58.5 22V112M59.5 30V113M60.5 31V112M61.5 32V103M62.5 16V119M63.5 32V107M64.5 27V105M65.5 28V111M66.5 15V111M67.5 34V129M68.5 30V112M69.5 37V107M70.5 41V114M71.5 38V134M72.5 24V132M73.5 45V103M74.5 38V106M75.5 43V127M76.5 37V108M77.5 33V96M78.5 36V102M79.5 35V98M80.5 38V102M81.5 46V111M82.5 36V114M83.5 16V108M84.5 34V103M85.5 37V117M86.5 15V112M87.5 35V107M88.5 31V104M89.5 37V101M90.5 40V98M91.5 39V114M92.5 34V111M93.5 40V120M94.5 37V100M95.5 30V106M96.5 34V107M97.5 42V104M98.5 31V107M99.5 41V101M100.5 46V104M101.5 39V111M102.5 30V118M103.5 43V104M104.5 47V108M105.5 40V108M106.5 38V111M107.5 16V113M108.5 22V112M109.5 17V112M110.5 2V117M111.5 34V109M112.5 41V108M113.5 42V102M114.5 22V104M115.5 42V103M116.5 46V109M117.5 17V115M118.5 39V111M119.5 40V117M120.5 49V111M121.5 46V111M122.5 35V136M123.5 40V107M124.5 21V109M125.5 42V106M126.5 34V114M127.5 34V102M128.5 41V105M129.5 21V108M130.5 36V118M131.5 36V101M132.5 24V104M133.5 48V112M134.5 48V100M135.5 31V135M136.5 48V103M137.5 34V109M138.5 38V94M139.5 36V103M140.5 42V105M141.5 41V109M142.5 42V105M143.5 35V109M144.5 37V111M145.5 40V100M146.5 44V104M147.5 39V110M148.5 43V101M149.5 27V107M150.5 34V97M151.5 38V98M152.5 38V105M153.5 28V107M154.5 29V103M155.5 35V103M156.5 18V105M157.5 31V112M158.5 40V129M159.5 37V102M160.5 41V86M161.5 30V116M162.5 33V96M163.5 23V105M164.5 31V103M165.5 33V119M166.5 37V101M167.5 41V127M168.5 31V109M169.5 16V118M170.5 26V115M171.5 34V108M172.5 36V135M173.5 34V116M174.5 32V100M175.5 13V100M176.5 33V108M177.5 32V108M178.5 35V134M179.5 29V104M180.5 42V106M181.5 43V107M182.5 29V101M183.5 29V109M184.5 30V101M185.5 28V101M186.5 29V106M187.5 29V99M188.5 24V126M189.5 5V103M190.5 21V104M191.5 36V102M192.5 7V100M193.5 23V114M194.5 5V92M195.5 19V111M196.5 30V110M197.5 16V113M198.5 17V108M199.5 17V119M200.5 15V107M201.5 26V111M202.5 38V106M203.5 31V100M204.5 29V96M205.5 42V100M206.5 34V96M207.5 31V94M208.5 42V119M209.5 23V94M210.5 25V98M211.5 33V95M212.5 26V104M213.5 32V87M214.5 36V101M215.5 36V95M216.5 39V89M217.5 51V99M218.5 48V98M219.5 49V96M220.5 46V94M221.5 45V95M222.5 43V101M223.5 39V102M224.5 35V100M225.5 38V94M226.5 35V94M227.5 36V124M228.5 31V103M229.5 17V97M230.5 48V104M231.5 45V101M232.5 39V93M233.5 35V100M234.5 33V98M235.5 45V102M236.5 41V99M237.5 34V107M238.5 28V97M239.5 37V101M240.5 9V94M241.5 30V106M242.5 34V97M243.5 35V104M244.5 34V99M245.5 40V86M246.5 35V91M247.5 32V99M248.5 24V101M249.5 41V107M250.5 42V100M251.5 36V100M252.5 38V93M253.5 33V90M254.5 36V99M255.5 34V100M256.5 53V103M257.5 19V100M258.5 35V108M259.5 38V110M260.5 37V107M261.5 38V124M262.5 38V99M263.5 27V111M264.5 31V105M265.5 29V112M266.5 35V113M267.5 15V124M268.5 29V103M269.5 30V106M270.5 23V108M271.5 29V112M272.5 32V105M273.5 32V107M274.5 32V100M275.5 29V110M276.5 28V102M277.5 35V98M278.5 34V104M279.5 39V108M280.5 37V102M281.5 36V116M282.5 39V112M283.5 40V107M284.5 38V107M285.5 29V112M286.5 16V108M287.5 37V124M288.5 29V124M289.5 11V104M290.5 36V101M291.5 35V117M292.5 44V111M293.5 44V103M294.5 37V106M295.5 46V133M296.5 44V111M297.5 54V137M298.5 51V107M299.5 38V111M300.5 45V113M301.5 51V119M302.5 38V117M303.5 50V120M304.5 38V118M305.5 45V108M306.5 33V124M307.5 34V106M308.5 35V120M309.5 21V135M310.5 34V108M311.5 35V110M312.5 21V99M313.5 35V112M314.5 27V97M315.5 4V113M316.5 31V122M317.5 21V112M318.5 22V117M319.5 35V104M320.5 2V107M321.5 39V101M322.5 35V109M323.5 41V111M324.5 42V104M325.5 35V128M326.5 37V110M327.5 40V120M328.5 42V110M329.5 19V114M330.5 39V122M331.5 39V118M332.5 48V137M333.5 44V126M334.5 42V113M335.5 34V117M336.5 40V110M337.5 46V122M338.5 37V111M339.5 39V113M340.5 43V104M341.5 7V124M342.5 34V101M343.5 32V109M344.5 27V108M345.5 33V103M346.5 30V109M347.5 38V113M348.5 37V114M349.5 33V123M350.5 19V112M351.5 38V114M352.5 39V101M353.5 45V103M354.5 41V100M355.5 37V106M356.5 45V102M357.5 45V130M358.5 36V107M359.5 39V102M360.5 34V99M361.5 41V89M362.5 41V100M363.5 49V117M364.5 43V109M365.5 31V101M366.5 34V100M367.5 35V107M368.5 35V109M369.5 33V103M370.5 35V104M371.5 20V112M372.5 45V106M373.5 40V124M374.5 42V93M375.5 47V104M376.5 41V97M377.5 47V124M378.5 30V98M379.5 22V106M380.5 44V104M381.5 49V106M382.5 52V92M383.5 40V90M384.5 47V98M385.5 44V98M386.5 49V104M387.5 44V97M388.5 40V105M389.5 32V113M390.5 28V120M391.5 37V106M392.5 32V107M393.5 37V101M394.5 32V97M395.5 30V90M396.5 34V96M397.5 34V103M398.5 39V102M399.5 34V103M400.5 32V107M401.5 34V104M402.5 39V104M403.5 38V107M404.5 38V102M405.5 38V108M406.5 43V103M407.5 44V93M408.5 27V112M409.5 34V106M410.5 13V101M411.5 49V102M412.5 42V103M413.5 34V102M414.5 43V113M415.5 41V107M416.5 33V106M417.5 41V103M418.5 40V97M419.5 34V94M420.5 28V101M421.5 38V109M422.5 43V98M423.5 44V99M424.5 21V104M425.5 38V101M426.5 38V97M427.5 44V108M428.5 51V103M429.5 43V104M430.5 40V108M431.5 47V114M432.5 47V106M433.5 47V116M434.5 32V116M435.5 36V120M436.5 33V136M437.5 21V108M438.5 25V105M439.5 31V102M440.5 38V111M441.5 32V110M442.5 27V112M443.5 35V116M444.5 34V128M445.5 35V105M446.5 28V108M447.5 24V99M448.5 26V101M449.5 24V100M450.5 33V108M451.5 5V102M452.5 37V132M453.5 25V109M454.5 30V108M455.5 21V101M456.5 24V107M457.5 16V109M458.5 30V119M459.5 37V101M460.5 42V112M461.5 41V101M462.5 36V102M463.5 42V91M464.5 40V99M465.5 42V100M466.5 36V117M467.5 14V138M468.5 46V113M469.5 40V117M470.5 44V115M471.5 31V119M472.5 47V117M473.5 37V109M474.5 27V125M475.5 29V113M476.5 30V106M477.5 33V110M478.5 45V106M479.5 33V111M480.5 41V110M481.5 25V114M482.5 33V111M483.5 38V138M484.5 49V115M485.5 39V110M486.5 30V116M487.5 40V112M488.5 33V105M489.5 45V114M490.5 43V112M491.5 51V115M492.5 50V110M493.5 47V112M494.5 41V114M495.5 47V109M496.5 22V137M497.5 49V118M498.5 44V114M499.5 41V116M500.5 45V115M501.5 37V99M502.5 37V112M503.5 34V96" stroke="#3232c8" stroke-width="1" fill="none"/><path d="M0.5 53V89M1.5 52V89M2.5 50V93M3.5 53V88M4.5 53V88M5.5 54V88M6.5 54V88M7.5 54V86M8.5 54V85M9.5 57V83M10.5 58V84M11.5 56V83M12.5 56V84M13.5 55V87M14.5 56V86M15.5 56V86M16.5 56V83M17.5 57V82M18.5 54V89M19.5 56V87M20.5 52V90M21.5 52V88M22.5 55V88M23.5 56V85M24.5 55V86M25.5 57V83M26.5 58V83M27.5 60V80M28.5 59V81M29.5 55V87M30.5 58V84M31.5 58V83M32.5 58V83M33.5 57V83M34.5 58V84M35.5 59V84M36.5 57V84M37.5 58V84M38.5 59V82M39.5 54V86M40.5 55V85M41.5 57V85M42.5 54V85M43.5 54V86M44.5 54V87M45.5 55V85M46.5 58V81M47.5 58V83M48.5 58V82M49.5 59V83M50.5 60V83M51.5 55V84M52.5 56V86M53.5 58V83M54.5 60V82M55.5 60V82M56.5 61V82M57.5 61V81M58.5 56V86M59.5 57V82M60.5 55V86M61.5 54V89M62.5 56V86M63.5 59V84M64.5 60V81M65.5 57V82M66.5 57V86M67.5 58V82M68.5 56V84M69.5 56V84M70.5 57V82M71.5 58V84M72.5 59V81M73.5 55V86M74.5 57V86M75.5 55V85M76.5 53V88M77.5 53V87M78.5 56V85M79.5 54V88M80.5 53V89M81.5 53V89M82.5 54V85M83.5 56V86M84.5 54V88M85.5 54V86M86.5 51V89M87.5 54V87M88.5 54V86M89.5 54V88M90.5 56V86M91.5 58V85M92.5 58V83M93.5 60V81M94.5 57V85M95.5 58V84M96.5 54V87M97.5 55V85M98.5 55V87M99.5 56V87M100.5 55V86M101.5 56V83M102.5 57V85M103.5 58V82M104.5 55V85M105.5 57V83M106.5 60V82M107.5 61V81M108.5 58V84M109.5 57V84M110.5 57V83M111.5 55V88M112.5 51V90M113.5 54V86M114.5 55V86M115.5 58V83M116.5 58V83M117.5 58V81M118.5 58V84M119.5 54V87M120.5 54V89M121.5 53V87M122.5 58V83M123.5 54V87M124.5 51V91M125.5 55V84M126.5 55V86M127.5 53V86M128.5 52V88M129.5 54V89M130.5 57V84M131.5 58V82M132.5 61V80M133.5 61V81M134.5 55V84M135.5 56V84M136.5 59V83M137.5 57V86M138.5 58V84M139.5 63V80M140.5 62V77M141.5 58V83M142.5 57V84M143.5 57V84M144.5 61V78M145.5 57V83M146.5 58V82M147.5 60V80M148.5 59V84M149.5 58V81M150.5 58V82M151.5 60V81M152.5 64V76M153.5 61V80M154.5 60V79M155.5 62V80M156.5 61V82M157.5 60V80M158.5 58V81M159.5 58V81M160.5 55V84M161.5 57V84M162.5 59V81M163.5 59V82M164.5 59V82M165.5 60V80M166.5 62V81M167.5 58V84M168.5 57V83M169.5 56V84M170.5 54V86M171.5 55V88M172.5 55V86M173.5 56V87M174.5 59V82M175.5 58V85M176.5 57V84M177.5 55V87M178.5 56V87M179.5 56V83M180.5 56V83M181.5 55V84M182.5 59V83M183.5 60V80M184.5 63V77M185.5 62V78M186.5 63V76M187.5 62V80M188.5 64V76M189.5 60V82M190.5 57V83M191.5 60V83M192.5 59V81M193.5 58V83M194.5 56V86M195.5 55V85M196.5 56V83M197.5 56V86M198.5 56V83M199.5 56V85M200.5 55V85M201.5 58V85M202.5 55V87M203.5 55V87M204.5 52V90M205.5 52V90M206.5 52V90M207.5 57V82M208.5 56V85M209.5 58V84M210.5 54V86M211.5 57V85M212.5 55V87M213.5 55V84M214.5 55V86M215.5 56V87M216.5 59V82M217.5 57V83M218.5 54V88M219.5 53V87M220.5 53V86M221.5 51V92M222.5 54V88M223.5 57V83M224.5 54V85M225.5 55V85M226.5 57V83M227.5 60V82M228.5 58V83M229.5 58V83M230.5 59V80M231.5 61V82M232.5 61V81M233.5 58V84M234.5 57V86M235.5 59V82M236.5 58V84M237.5 58V84M238.5 57V84M239.5 57V84M240.5 55V88M241.5 56V85M242.5 59V81M243.5 58V81M244.5 56V87M245.5 55V84M246.5 54V89M247.5 53V89M248.5 55V85M249.5 53V89M250.5 53V88M251.5 55V85M252.5 58V82M253.5 57V84M254.5 59V82M255.5 59V82M256.5 60V81M257.5 58V82M258.5 60V83M259.5 57V83M260.5 55V86M261.5 56V87M262.5 53V87M263.5 56V83M264.5 53V88M265.5 52V90M266.5 55V84M267.5 57V85M268.5 56V84M269.5 58V85M270.5 55V84M271.5 58V81M272.5 55V85M273.5 58V84M274.5 59V82M275.5 55V84M276.5 52V87M277.5 54V89M278.5 58V82M279.5 58V82M280.5 61V81M281.5 61V78M282.5 57V83M283.5 56V86M284.5 57V85M285.5 55V85M286.5 59V81M287.5 55V88M288.5 57V83M289.5 54V88M290.5 57V82M291.5 56V86M292.5 58V82M293.5 56V87M294.5 55V85M295.5 54V87M296.5 54V88M297.5 56V85M298.5 59V82M299.5 60V82M300.5 60V82M301.5 62V77M302.5 60V81M303.5 61V79M304.5 59V82M305.5 60V82M306.5 58V83M307.5 60V82M308.5 61V79M309.5 60V81M310.5 59V83M311.5 56V85M312.5 55V86M313.5 58V82M314.5 56V83M315.5 54V88M316.5 56V87M317.5 57V85M318.5 59V80M319.5 62V81M320.5 64V78M321.5 63V80M322.5 64V76M323.5 60V82M324.5 60V83M325.5 60V79M326.5 58V83M327.5 54V86M328.5 53V87M329.5 55V87M330.5 56V84M331.5 57V83M332.5 55V87M333.5 57V85M334.5 55V88M335.5 55V88M336.5 57V86M337.5 54V88M338.5 58V84M339.5 58V83M340.5 60V80M341.5 59V81M342.5 60V83M343.5 59V84M344.5 58V83M345.5 59V81M346.5 60V81M347.5 59V82M348.5 60V80M349.5 59V83M350.5 56V85M351.5 55V86M352.5 53V89M353.5 56V86M354.5 59V82M355.5 60V81M356.5 60V83M357.5 59V83M358.5 55V87M359.5 59V82M360.5 56V84M361.5 54V85M362.5 55V85M363.5 56V84M364.5 58V81M365.5 56V83M366.5 55V86M367.5 54V87M368.5 56V85M369.5 57V85M370.5 55V88M371.5 58V84M372.5 58V84M373.5 57V86M374.5 55V86M375.5 54V87M376.5 56V85M377.5 52V88M378.5 55V88M379.5 57V85M380.5 60V82M381.5 59V80M382.5 59V82M383.5 57V85M384.5 58V82M385.5 58V84M386.5 54V86M387.5 58V82M388.5 58V85M389.5 59V80M390.5 59V84M391.5 54V88M392.5 56V83M393.5 53V88M394.5 54V87M395.5 51V88M396.5 52V88M397.5 54V86M398.5 54V85M399.5 57V86M400.5 55V87M401.5 55V84M402.5 55V87M403.5 57V84M404.5 54V87M405.5 56V84M406.5 56V86M407.5 56V85M408.5 57V84M409.5 55V85M410.5 58V81M411.5 55V86M412.5 53V89M413.5 56V84M414.5 60V80M415.5 62V77M416.5 62V81M417.5 59V84M418.5 59V84M419.5 57V83M420.5 57V85M421.5 59V81M422.5 56V85M423.5 56V87M424.5 56V84M425.5 59V80M426.5 56V84M427.5 57V84M428.5 57V83M429.5 56V86M430.5 57V84M431.5 56V83M432.5 53V86M433.5 54V87M434.5 58V82M435.5 55V86M436.5 56V84M437.5 55V86M438.5 60V83M439.5 60V81M440.5 57V86M441.5 58V82M442.5 58V82M443.5 57V86M444.5 60V81M445.5 59V83M446.5 62V80M447.5 62V77M448.5 59V80M449.5 60V82M450.5 61V80M451.5 59V83M452.5 58V84M453.5 60V82M454.5 59V84M455.5 61V79M456.5 59V83M457.5 62V78M458.5 59V83M459.5 56V84M460.5 54V86M461.5 57V85M462.5 55V87M463.5 57V82M464.5 59V82M465.5 57V85M466.5 60V80M467.5 57V86M468.5 57V85M469.5 55V85M470.5 55V88M471.5 59V80M472.5 57V84M473.5 59V83M474.5 55V85M475.5 56V87M476.5 55V87M477.5 53V88M478.5 55V86M479.5 53V89M480.5 55V86M481.5 53V90M482.5 55V84M483.5 57V83M484.5 59V82M485.5 59V80M486.5 58V81M487.5 53V90M488.5 50V89M489.5 51V90M490.5 54V86M491.5 54V89M492.5 54V89M493.5 53V87M494.5 56V85M495.5 52V89M496.5 49V93M497.5 52V89M498.5 56V84M499.5 59V82M500.5 57V85M501.5 59V83M502.5 58V81M503.5 57V86" stroke="#6464dc" stroke-width="1" fill="none"/></svg>
<svg style="left:138px;top:323.5px" width="10" height="10"><path d="M1 5 H8.500 M5.500 0.800 L1.200 5 L5.500 9.200" fill="none" stroke="#000" stroke-width="1.250"/></svg>
<svg style="left:138px;top:452.5px" width="10" height="10"><path d="M1 5 H8.500 M5.500 0.800 L1.200 5 L5.500 9.200" fill="none" stroke="#000" stroke-width="1.250"/></svg>
<span class="t" style="left:110.70px;top:173.25px;font-size:13px;line-height:13px;font-weight:bold;color:#000;letter-spacing:0.205px;transform:scaleX(1.1200);-webkit-text-stroke:.300px #000">1,0</span>
<span class="t" style="left:110.70px;top:202.07px;font-size:13.5px;line-height:13.5px;font-weight:normal;color:#000;letter-spacing:0.000px;transform:scaleX(1.0278);">0,5</span>
<span class="t" style="left:110.70px;top:237.25px;font-size:13px;line-height:13px;font-weight:bold;color:#000;letter-spacing:0.000px;transform:scaleX(1.0833);-webkit-text-stroke:.300px #000">0,0</span>
<span class="t" style="left:105.70px;top:272.07px;font-size:13.5px;line-height:13.5px;font-weight:normal;color:#000;letter-spacing:0.000px;transform:scaleX(1.0682);">-0,5</span>
<span class="t" style="left:105.00px;top:300.25px;font-size:13px;line-height:13px;font-weight:bold;color:#000;letter-spacing:0.167px;transform:scaleX(1.1200);-webkit-text-stroke:.300px #000">-1,0</span>
<div style="left:133px;top:208px;width:3px;height:1px;background:#000;"></div>
<div style="left:132px;top:243px;width:5px;height:1px;background:#000;"></div>
<div style="left:133px;top:278px;width:3px;height:1px;background:#000;"></div>
<span class="t" style="left:110.70px;top:323.25px;font-size:13px;line-height:13px;font-weight:bold;color:#000;letter-spacing:0.205px;transform:scaleX(1.1200);-webkit-text-stroke:.300px #000">1,0</span>
<span class="t" style="left:110.70px;top:352.07px;font-size:13.5px;line-height:13.5px;font-weight:normal;color:#000;letter-spacing:0.000px;transform:scaleX(1.0278);">0,5</span>
<span class="t" style="left:110.70px;top:387.25px;font-size:13px;line-height:13px;font-weight:bold;color:#000;letter-spacing:0.000px;transform:scaleX(1.0833);-webkit-text-stroke:.300px #000">0,0</span>
<span class="t" style="left:105.70px;top:422.07px;font-size:13.5px;line-height:13.5px;font-weight:normal;color:#000;letter-spacing:0.000px;transform:scaleX(1.0682);">-0,5</span>
<span class="t" style="left:105.00px;top:450.25px;font-size:13px;line-height:13px;font-weight:bold;color:#000;letter-spacing:0.167px;transform:scaleX(1.1200);-webkit-text-stroke:.300px #000">-1,0</span>
<div style="left:133px;top:358px;width:3px;height:1px;background:#000;"></div>
<div style="left:132px;top:393px;width:5px;height:1px;background:#000;"></div>
<div style="left:133px;top:428px;width:3px;height:1px;background:#000;"></div>
<div style="left:5px;top:172px;width:95px;height:1px;background:#fdfdfd;"></div>
<div style="left:19px;top:172px;width:2px;height:15px;background:#9c9c9a;"></div>
<div style="left:5px;top:186px;width:95px;height:2px;background:#9c9c9a;"></div>
<div style="left:21px;top:172px;width:1px;height:14px;background:#fdfdfd;"></div>
<div style="left:98px;top:172px;width:2px;height:15px;background:#9c9c9a;"></div>
<svg style="left:7px;top:174px" width="12" height="12"><path d="M2.200 2.300 L9.300 9.300 M9.300 2.300 L2.200 9.300" stroke="#000" stroke-width="1.500"/></svg>
<span class="t" style="left:21.50px;top:174.63px;font-size:9.3px;line-height:9.3px;font-weight:normal;color:#000;letter-spacing:0.023px;transform:scaleX(1.1200);">Звуковая до</span>
<svg style="left:84px;top:175px" width="13" height="8"><path d="M0.800 0.800 H12 L6.400 6.800 Z" fill="#000"/></svg>
<span class="t" style="left:7.20px;top:190.63px;font-size:9.3px;line-height:9.3px;font-weight:normal;color:#000;letter-spacing:0.000px;transform:scaleX(1.1027);">Стерео, 44100Hz</span>
<span class="t" style="left:7.20px;top:206.63px;font-size:9.3px;line-height:9.3px;font-weight:normal;color:#000;letter-spacing:0.190px;transform:scaleX(1.1200);">32-bit float</span>
<div style="left:5px;top:221px;width:95px;height:1px;background:#a2a2a0;"></div>
<div style="left:5px;top:236px;width:95px;height:2px;background:#a2a2a0;"></div>
<div style="left:51px;top:221px;width:2px;height:16px;background:#a2a2a0;"></div>
<div style="left:98px;top:221px;width:2px;height:16px;background:#a2a2a0;"></div>
<div style="left:5px;top:222px;width:46px;height:1px;background:#fdfdfd;"></div>
<div style="left:53px;top:222px;width:45px;height:1px;background:#fdfdfd;"></div>
<span class="t" style="left:15.50px;top:223.63px;font-size:9.3px;line-height:9.3px;font-weight:normal;color:#000;letter-spacing:0.089px;transform:scaleX(1.1200);">Тихо</span>
<span class="t" style="left:62.70px;top:223.63px;font-size:9.3px;line-height:9.3px;font-weight:normal;color:#000;letter-spacing:0.000px;transform:scaleX(1.0682);">Соло</span>
<div style="left:16px;top:258px;width:77px;height:1px;background:#a8a8a6;"></div>
<div style="left:17px;top:253px;width:1px;height:4px;background:#a0a09e;"></div>
<div style="left:24px;top:255px;width:1px;height:2px;background:#a0a09e;"></div>
<div style="left:31px;top:255px;width:1px;height:2px;background:#a0a09e;"></div>
<div style="left:39px;top:255px;width:1px;height:2px;background:#a0a09e;"></div>
<div style="left:46px;top:255px;width:1px;height:2px;background:#a0a09e;"></div>
<div style="left:53px;top:255px;width:1px;height:2px;background:#a0a09e;"></div>
<div style="left:60px;top:255px;width:1px;height:2px;background:#a0a09e;"></div>
<div style="left:67px;top:255px;width:1px;height:2px;background:#a0a09e;"></div>
<div style="left:75px;top:255px;width:1px;height:2px;background:#a0a09e;"></div>
<div style="left:82px;top:255px;width:1px;height:2px;background:#a0a09e;"></div>
<div style="left:89px;top:253px;width:1px;height:4px;background:#a0a09e;"></div>
<svg style="left:47px;top:249px" width="12" height="16" viewBox="0 0 12 16"><path d="M2.200 0.800 H9.800 L11.200 2.400 V9 L6 14.600 L0.800 9 V2.400 Z" fill="#b4b4dc" stroke="#000" stroke-width="1.100"/><path d="M2.600 2 H9.400 L10.200 2.800" fill="none" stroke="#f4f4fc" stroke-width=".800"/><path d="M4 6.300 H8 M4 8.800 H8" stroke="#8080b8" stroke-width="1"/><path d="M4 5.400 H8 M4 7.800 H8" stroke="#e8e8f8" stroke-width=".8"/></svg>
<div style="left:16px;top:246.5px;width:5px;height:1.4px;background:#000;"></div>
<div style="left:84px;top:246.5px;width:5.4px;height:1.4px;background:#000;"></div>
<div style="left:86px;top:244.5px;width:1.4px;height:5.4px;background:#000;"></div>
<div style="left:16px;top:288px;width:77px;height:1px;background:#a8a8a6;"></div>
<div style="left:17px;top:283px;width:1px;height:4px;background:#a0a09e;"></div>
<div style="left:24px;top:285px;width:1px;height:2px;background:#a0a09e;"></div>
<div style="left:31px;top:285px;width:1px;height:2px;background:#a0a09e;"></div>
<div style="left:39px;top:285px;width:1px;height:2px;background:#a0a09e;"></div>
<div style="left:46px;top:285px;width:1px;height:2px;background:#a0a09e;"></div>
<div style="left:53px;top:285px;width:1px;height:2px;background:#a0a09e;"></div>
<div style="left:60px;top:285px;width:1px;height:2px;background:#a0a09e;"></div>
<div style="left:67px;top:285px;width:1px;height:2px;background:#a0a09e;"></div>
<div style="left:75px;top:285px;width:1px;height:2px;background:#a0a09e;"></div>
<div style="left:82px;top:285px;width:1px;height:2px;background:#a0a09e;"></div>
<div style="left:89px;top:283px;width:1px;height:4px;background:#a0a09e;"></div>
<svg style="left:47px;top:279px" width="12" height="16" viewBox="0 0 12 16"><path d="M2.200 0.800 H9.800 L11.200 2.400 V9 L6 14.600 L0.800 9 V2.400 Z" fill="#b4b4dc" stroke="#000" stroke-width="1.100"/><path d="M2.600 2 H9.400 L10.200 2.800" fill="none" stroke="#f4f4fc" stroke-width=".800"/><path d="M4 6.300 H8 M4 8.800 H8" stroke="#8080b8" stroke-width="1"/><path d="M4 5.400 H8 M4 7.800 H8" stroke="#e8e8f8" stroke-width=".8"/></svg>
<span class="t" style="left:16.20px;top:272.25px;font-size:13px;line-height:13px;font-weight:normal;color:#000;letter-spacing:0.000px;transform:scaleX(0.9375);">Л</span>
<span class="t" style="left:82.70px;top:272.25px;font-size:13px;line-height:13px;font-weight:normal;color:#000;letter-spacing:0.000px;transform:scaleX(0.9375);">П</span>
<div style="left:23px;top:448px;width:62px;height:17px;background:#f5f5f3;border:1px solid #a2a2a0;border-bottom:none"></div>
<svg style="left:48px;top:453px" width="14" height="8"><path d="M1 6.600 H12.400 L6.700 0.800 Z" fill="#a4a4a2"/></svg>
<div style="left:0px;top:908px;width:1280px;height:55px;background:#f5f5f3;"></div>
<div style="left:0px;top:963px;width:1280px;height:1px;background:#a6a6a4;"></div>
<div style="left:0px;top:964px;width:1280px;height:25px;background:#ececea;"></div>
<div style="left:0px;top:964px;width:1280px;height:1px;background:#fbfbfa;"></div>
<div style="left:0px;top:908px;width:1px;height:55px;background:#a6a6a4;"></div>
<div style="left:1px;top:908px;width:9px;height:55px;background:#fcfcfb;"></div>
<div style="left:10px;top:908px;width:1px;height:55px;background:#a6a6a4;"></div>
<div style="left:4px;top:913px;width:4px;height:1px;background:#9a9a98;"></div>
<div style="left:4px;top:917px;width:4px;height:1px;background:#9a9a98;"></div>
<div style="left:4px;top:921px;width:4px;height:1px;background:#9a9a98;"></div>
<div style="left:4px;top:925px;width:4px;height:1px;background:#9a9a98;"></div>
<div style="left:4px;top:929px;width:4px;height:1px;background:#9a9a98;"></div>
<div style="left:4px;top:933px;width:4px;height:1px;background:#9a9a98;"></div>
<div style="left:4px;top:937px;width:4px;height:1px;background:#9a9a98;"></div>
<div style="left:4px;top:941px;width:4px;height:1px;background:#9a9a98;"></div>
<div style="left:4px;top:945px;width:4px;height:1px;background:#9a9a98;"></div>
<div style="left:4px;top:949px;width:4px;height:1px;background:#9a9a98;"></div>
<div style="left:4px;top:953px;width:4px;height:1px;background:#9a9a98;"></div>
<div style="left:4px;top:957px;width:4px;height:1px;background:#9a9a98;"></div>
<span class="t" style="left:11.70px;top:907.07px;font-size:13.5px;line-height:13.5px;font-weight:normal;color:#000;letter-spacing:0.000px;transform:scaleX(1.0102);">Частота</span>
<span class="t" style="left:11.70px;top:922.07px;font-size:13.5px;line-height:13.5px;font-weight:normal;color:#000;letter-spacing:0.000px;transform:scaleX(1.0797);">проекта (Гц):</span>
<div style="left:12px;top:937px;width:53px;height:27px;border:1px solid #8e8e8c;border-right:none;border-radius:3.500px 0 0 0;background:#fff;box-shadow:inset 0 1px 1px #c8c8c8"></div>
<div style="left:64px;top:938px;width:27px;height:26px;border:1px solid #969694;border-radius:0 3.500px 0 0;background:linear-gradient(to bottom,#fff 0,#f6f6f5 45%,#e6e6e4 100%)"></div>
<svg style="left:71px;top:946px" width="14" height="9"><path d="M1.500 1.500 L6.800 6.800 L12.100 1.500" fill="none" stroke="#111" stroke-width="1.700"/></svg>
<span class="t" style="left:14.40px;top:945.07px;font-size:13.5px;line-height:13.5px;font-weight:normal;color:#000;letter-spacing:0.000px;transform:scaleX(0.9459);">44100</span>
<div style="left:128px;top:937px;width:1px;height:26px;background:#c2c2c0;"></div>
<span class="t" style="left:137.50px;top:944.07px;font-size:13.5px;line-height:13.5px;font-weight:normal;color:#000;letter-spacing:0.000px;transform:scaleX(1.0458);">Прилипать к линейке</span>
<div style="left:286px;top:944px;width:13px;height:13px;border:1px solid #888886;border-radius:2px;background:#fff"></div>
<span class="t" style="left:312.00px;top:914.07px;font-size:13.5px;line-height:13.5px;font-weight:normal;color:#000;letter-spacing:0.000px;transform:scaleX(1.0041);">Начало выделения:</span>
<div style="left:466px;top:915px;width:12px;height:12px;border:1px solid #7c7c7a;border-radius:50%;background:radial-gradient(circle,#000 0,#000 2.200px,#fff 3.200px)"></div>
<span class="t" style="left:484.20px;top:914.07px;font-size:13.5px;line-height:13.5px;font-weight:normal;color:#000;letter-spacing:0.000px;transform:scaleX(1.0811);">Конец</span>
<div style="left:536px;top:915px;width:12px;height:12px;border:1px solid #7c7c7a;border-radius:50%;background:#fff"></div>
<span class="t" style="left:554.90px;top:914.07px;font-size:13.5px;line-height:13.5px;font-weight:normal;color:#000;letter-spacing:0.000px;transform:scaleX(1.0287);">Длительность</span>
<span class="t" style="left:659.80px;top:914.07px;font-size:13.5px;line-height:13.5px;font-weight:normal;color:#000;letter-spacing:0.000px;transform:scaleX(1.0631);">Текущая позиция:</span>
<div style="left:654px;top:937px;width:1px;height:26px;background:#c2c2c0;"></div>
<div style="left:313px;top:940px;width:144px;height:22px;border:1px solid #8c8c8a;background:#fafaf9"></div>
<div style="left:315px;top:942px;width:131px;height:18px;background:#d4d4d4;"></div>
<div style="left:446px;top:942px;width:10px;height:18px;background:#d0d0d0;border-right:1px solid #9a9a9a;border-bottom:1px solid #9a9a9a;border-top:1px solid #f4f4f4;border-left:1px solid #f4f4f4"></div>
<svg style="left:447px;top:948px" width="9" height="6"><path d="M0.500 0.600 H8.300 L4.400 5.200 Z" fill="#000"/></svg>
<span class="t" style="left:316.70px;top:944.66px;font-size:12.8px;line-height:12.8px;color:#0000c4;transform:scaleX(1.13)">0</span>
<span class="t" style="left:326.70px;top:944.66px;font-size:12.8px;line-height:12.8px;color:#0000c4;transform:scaleX(1.13)">0</span>
<span class="t" style="left:349.70px;top:944.66px;font-size:12.8px;line-height:12.8px;color:#0000c4;transform:scaleX(1.13)">0</span>
<span class="t" style="left:359.70px;top:944.66px;font-size:12.8px;line-height:12.8px;color:#0000c4;transform:scaleX(1.13)">0</span>
<span class="t" style="left:383.70px;top:944.66px;font-size:12.8px;line-height:12.8px;color:#0000c4;transform:scaleX(1.13)">0</span>
<span class="t" style="left:393.70px;top:944.66px;font-size:12.8px;line-height:12.8px;color:#0000c4;transform:scaleX(1.13)">0</span>
<span class="t" style="left:406.70px;top:944.66px;font-size:12.8px;line-height:12.8px;color:#0000c4;transform:scaleX(1.13)">0</span>
<span class="t" style="left:416.70px;top:944.66px;font-size:12.8px;line-height:12.8px;color:#0000c4;transform:scaleX(1.13)">0</span>
<span class="t" style="left:426.70px;top:944.66px;font-size:12.8px;line-height:12.8px;color:#0000c4;transform:scaleX(1.13)">0</span>
<span class="t" style="left:339.00px;top:945.77px;font-size:11.5px;line-height:11.5px;color:#1a1a1a;transform:scaleX(1.25)">ч</span>
<span class="t" style="left:372.20px;top:945.77px;font-size:11.5px;line-height:11.5px;color:#1a1a1a;transform:scaleX(1.05)">м</span>
<span class="t" style="left:403.60px;top:944.66px;font-size:12.8px;line-height:12.8px;color:#1c1c90;transform:scaleX(1)">.</span>
<span class="t" style="left:439.00px;top:945.77px;font-size:11.5px;line-height:11.5px;color:#1a1a1a;transform:scaleX(1.2)">с</span>
<div style="left:463px;top:940px;width:144px;height:22px;border:1px solid #8c8c8a;background:#fafaf9"></div>
<div style="left:465px;top:942px;width:131px;height:18px;background:#d4d4d4;"></div>
<div style="left:596px;top:942px;width:10px;height:18px;background:#d0d0d0;border-right:1px solid #9a9a9a;border-bottom:1px solid #9a9a9a;border-top:1px solid #f4f4f4;border-left:1px solid #f4f4f4"></div>
<svg style="left:597px;top:948px" width="9" height="6"><path d="M0.500 0.600 H8.300 L4.400 5.200 Z" fill="#000"/></svg>
<span class="t" style="left:466.70px;top:944.66px;font-size:12.8px;line-height:12.8px;color:#0000c4;transform:scaleX(1.13)">0</span>
<span class="t" style="left:476.70px;top:944.66px;font-size:12.8px;line-height:12.8px;color:#0000c4;transform:scaleX(1.13)">0</span>
<span class="t" style="left:499.70px;top:944.66px;font-size:12.8px;line-height:12.8px;color:#0000c4;transform:scaleX(1.13)">0</span>
<span class="t" style="left:509.70px;top:944.66px;font-size:12.8px;line-height:12.8px;color:#0000c4;transform:scaleX(1.13)">0</span>
<span class="t" style="left:533.70px;top:944.66px;font-size:12.8px;line-height:12.8px;color:#0000c4;transform:scaleX(1.13)">0</span>
<span class="t" style="left:543.70px;top:944.66px;font-size:12.8px;line-height:12.8px;color:#0000c4;transform:scaleX(1.13)">0</span>
<span class="t" style="left:556.70px;top:944.66px;font-size:12.8px;line-height:12.8px;color:#0000c4;transform:scaleX(1.13)">0</span>
<span class="t" style="left:566.70px;top:944.66px;font-size:12.8px;line-height:12.8px;color:#0000c4;transform:scaleX(1.13)">0</span>
<span class="t" style="left:576.70px;top:944.66px;font-size:12.8px;line-height:12.8px;color:#0000c4;transform:scaleX(1.13)">0</span>
<span class="t" style="left:489.00px;top:945.77px;font-size:11.5px;line-height:11.5px;color:#1a1a1a;transform:scaleX(1.25)">ч</span>
<span class="t" style="left:522.20px;top:945.77px;font-size:11.5px;line-height:11.5px;color:#1a1a1a;transform:scaleX(1.05)">м</span>
<span class="t" style="left:553.60px;top:944.66px;font-size:12.8px;line-height:12.8px;color:#1c1c90;transform:scaleX(1)">.</span>
<span class="t" style="left:589.00px;top:945.77px;font-size:11.5px;line-height:11.5px;color:#1a1a1a;transform:scaleX(1.2)">с</span>
<div style="left:660px;top:940px;width:144px;height:22px;border:1px solid #8c8c8a;background:#fafaf9"></div>
<div style="left:662px;top:942px;width:131px;height:18px;background:#d4d4d4;"></div>
<div style="left:793px;top:942px;width:10px;height:18px;background:#d0d0d0;border-right:1px solid #9a9a9a;border-bottom:1px solid #9a9a9a;border-top:1px solid #f4f4f4;border-left:1px solid #f4f4f4"></div>
<svg style="left:794px;top:948px" width="9" height="6"><path d="M0.500 0.600 H8.300 L4.400 5.200 Z" fill="#000"/></svg>
<span class="t" style="left:663.70px;top:944.66px;font-size:12.8px;line-height:12.8px;color:#0000c4;transform:scaleX(1.13)">0</span>
<span class="t" style="left:673.70px;top:944.66px;font-size:12.8px;line-height:12.8px;color:#0000c4;transform:scaleX(1.13)">0</span>
<span class="t" style="left:696.70px;top:944.66px;font-size:12.8px;line-height:12.8px;color:#0000c4;transform:scaleX(1.13)">0</span>
<span class="t" style="left:706.70px;top:944.66px;font-size:12.8px;line-height:12.8px;color:#0000c4;transform:scaleX(1.13)">0</span>
<span class="t" style="left:730.70px;top:944.66px;font-size:12.8px;line-height:12.8px;color:#0000c4;transform:scaleX(1.13)">0</span>
<span class="t" style="left:740.70px;top:944.66px;font-size:12.8px;line-height:12.8px;color:#0000c4;transform:scaleX(1.13)">0</span>
<span class="t" style="left:753.70px;top:944.66px;font-size:12.8px;line-height:12.8px;color:#0000c4;transform:scaleX(1.13)">0</span>
<span class="t" style="left:763.70px;top:944.66px;font-size:12.8px;line-height:12.8px;color:#0000c4;transform:scaleX(1.13)">0</span>
<span class="t" style="left:773.70px;top:944.66px;font-size:12.8px;line-height:12.8px;color:#0000c4;transform:scaleX(1.13)">0</span>
<span class="t" style="left:686.00px;top:945.77px;font-size:11.5px;line-height:11.5px;color:#1a1a1a;transform:scaleX(1.25)">ч</span>
<span class="t" style="left:719.20px;top:945.77px;font-size:11.5px;line-height:11.5px;color:#1a1a1a;transform:scaleX(1.05)">м</span>
<span class="t" style="left:750.60px;top:944.66px;font-size:12.8px;line-height:12.8px;color:#1c1c90;transform:scaleX(1)">.</span>
<span class="t" style="left:786.00px;top:945.77px;font-size:11.5px;line-height:11.5px;color:#1a1a1a;transform:scaleX(1.2)">с</span>
<div style="left:2px;top:966px;width:1049px;height:22px;border-top:1px solid #9e9e9c;border-left:1px solid #9e9e9c;border-right:1px solid #fdfdfd;border-bottom:1px solid #fdfdfd"></div>
<div style="left:1054px;top:966px;width:225px;height:22px;border-top:1px solid #9e9e9c;border-left:1px solid #9e9e9c;border-right:1px solid #fdfdfd;border-bottom:1px solid #fdfdfd"></div>
<span class="t" style="left:1056.40px;top:971.07px;font-size:13.5px;line-height:13.5px;font-weight:normal;color:#000;letter-spacing:0.000px;transform:scaleX(1.0114);">Реальная частота: 44100 Гц</span>
<svg style="left:1263px;top:975px" width="14" height="13" shape-rendering="crispEdges"><rect x="12" y="2" width="1" height="1" fill="#fdfdfd"/><rect x="11" y="1" width="1.200" height="1.200" fill="#9a9a98"/><rect x="12" y="5" width="1" height="1" fill="#fdfdfd"/><rect x="11" y="4" width="1.200" height="1.200" fill="#9a9a98"/><rect x="9" y="5" width="1" height="1" fill="#fdfdfd"/><rect x="8" y="4" width="1.200" height="1.200" fill="#9a9a98"/><rect x="12" y="8" width="1" height="1" fill="#fdfdfd"/><rect x="11" y="7" width="1.200" height="1.200" fill="#9a9a98"/><rect x="9" y="8" width="1" height="1" fill="#fdfdfd"/><rect x="8" y="7" width="1.200" height="1.200" fill="#9a9a98"/><rect x="6" y="8" width="1" height="1" fill="#fdfdfd"/><rect x="5" y="7" width="1.200" height="1.200" fill="#9a9a98"/><rect x="12" y="11" width="1" height="1" fill="#fdfdfd"/><rect x="11" y="10" width="1.200" height="1.200" fill="#9a9a98"/><rect x="9" y="11" width="1" height="1" fill="#fdfdfd"/><rect x="8" y="10" width="1.200" height="1.200" fill="#9a9a98"/><rect x="6" y="11" width="1" height="1" fill="#fdfdfd"/><rect x="5" y="10" width="1.200" height="1.200" fill="#9a9a98"/><rect x="3" y="11" width="1" height="1" fill="#fdfdfd"/><rect x="2" y="10" width="1.200" height="1.200" fill="#9a9a98"/></svg>
</div></body></html>
